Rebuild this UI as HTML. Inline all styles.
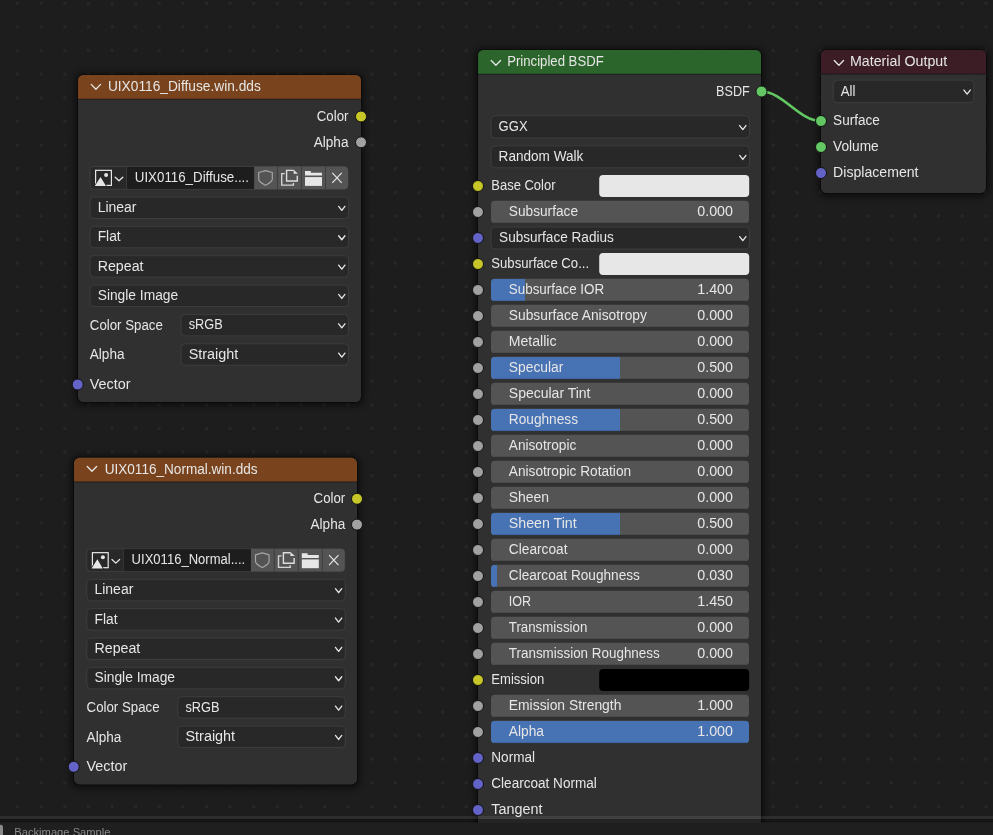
<!DOCTYPE html><html><head><meta charset="utf-8"><style>html,body{margin:0;padding:0;background:#1d1d1d;overflow:hidden;width:993px;height:835px}svg{display:block;will-change:transform}</style></head><body><svg width="993" height="835" viewBox="0 0 993 835" font-family="Liberation Sans, sans-serif">
<defs><filter id="blur" x="-10%" y="-10%" width="120%" height="120%"><feGaussianBlur stdDeviation="3.2"/></filter>
<pattern id="grid" x="16.5" y="2.4" width="23.62" height="23.62" patternUnits="userSpaceOnUse"><rect x="-0.2" y="-0.2" width="2.6" height="2.6" fill="#272727"/></pattern></defs>
<rect width="993" height="835" fill="#1d1d1d"/>
<path fill="#272727" d="M16.1 1.7h3v3.2h-3zM16.1 25.3h3v3.2h-3zM16.1 48.9h3v3.2h-3zM16.1 72.6h3v3.2h-3zM16.1 96.2h3v3.2h-3zM16.1 119.8h3v3.2h-3zM16.1 143.4h3v3.2h-3zM16.1 167.0h3v3.2h-3zM16.1 190.7h3v3.2h-3zM16.1 214.3h3v3.2h-3zM16.1 237.9h3v3.2h-3zM16.1 261.5h3v3.2h-3zM16.1 285.1h3v3.2h-3zM16.1 308.8h3v3.2h-3zM16.1 332.4h3v3.2h-3zM16.1 356.0h3v3.2h-3zM16.1 379.6h3v3.2h-3zM16.1 403.2h3v3.2h-3zM16.1 426.9h3v3.2h-3zM16.1 450.5h3v3.2h-3zM16.1 474.1h3v3.2h-3zM16.1 497.7h3v3.2h-3zM16.1 521.3h3v3.2h-3zM16.1 545.0h3v3.2h-3zM16.1 568.6h3v3.2h-3zM16.1 592.2h3v3.2h-3zM16.1 615.8h3v3.2h-3zM16.1 639.4h3v3.2h-3zM16.1 663.1h3v3.2h-3zM16.1 686.7h3v3.2h-3zM16.1 710.3h3v3.2h-3zM16.1 733.9h3v3.2h-3zM16.1 757.5h3v3.2h-3zM16.1 781.2h3v3.2h-3zM16.1 804.8h3v3.2h-3zM16.1 828.4h3v3.2h-3zM39.7 1.7h3v3.2h-3zM39.7 25.3h3v3.2h-3zM39.7 48.9h3v3.2h-3zM39.7 72.6h3v3.2h-3zM39.7 96.2h3v3.2h-3zM39.7 119.8h3v3.2h-3zM39.7 143.4h3v3.2h-3zM39.7 167.0h3v3.2h-3zM39.7 190.7h3v3.2h-3zM39.7 214.3h3v3.2h-3zM39.7 237.9h3v3.2h-3zM39.7 261.5h3v3.2h-3zM39.7 285.1h3v3.2h-3zM39.7 308.8h3v3.2h-3zM39.7 332.4h3v3.2h-3zM39.7 356.0h3v3.2h-3zM39.7 379.6h3v3.2h-3zM39.7 403.2h3v3.2h-3zM39.7 426.9h3v3.2h-3zM39.7 450.5h3v3.2h-3zM39.7 474.1h3v3.2h-3zM39.7 497.7h3v3.2h-3zM39.7 521.3h3v3.2h-3zM39.7 545.0h3v3.2h-3zM39.7 568.6h3v3.2h-3zM39.7 592.2h3v3.2h-3zM39.7 615.8h3v3.2h-3zM39.7 639.4h3v3.2h-3zM39.7 663.1h3v3.2h-3zM39.7 686.7h3v3.2h-3zM39.7 710.3h3v3.2h-3zM39.7 733.9h3v3.2h-3zM39.7 757.5h3v3.2h-3zM39.7 781.2h3v3.2h-3zM39.7 804.8h3v3.2h-3zM39.7 828.4h3v3.2h-3zM63.3 1.7h3v3.2h-3zM63.3 25.3h3v3.2h-3zM63.3 48.9h3v3.2h-3zM63.3 72.6h3v3.2h-3zM63.3 96.2h3v3.2h-3zM63.3 119.8h3v3.2h-3zM63.3 143.4h3v3.2h-3zM63.3 167.0h3v3.2h-3zM63.3 190.7h3v3.2h-3zM63.3 214.3h3v3.2h-3zM63.3 237.9h3v3.2h-3zM63.3 261.5h3v3.2h-3zM63.3 285.1h3v3.2h-3zM63.3 308.8h3v3.2h-3zM63.3 332.4h3v3.2h-3zM63.3 356.0h3v3.2h-3zM63.3 379.6h3v3.2h-3zM63.3 403.2h3v3.2h-3zM63.3 426.9h3v3.2h-3zM63.3 450.5h3v3.2h-3zM63.3 474.1h3v3.2h-3zM63.3 497.7h3v3.2h-3zM63.3 521.3h3v3.2h-3zM63.3 545.0h3v3.2h-3zM63.3 568.6h3v3.2h-3zM63.3 592.2h3v3.2h-3zM63.3 615.8h3v3.2h-3zM63.3 639.4h3v3.2h-3zM63.3 663.1h3v3.2h-3zM63.3 686.7h3v3.2h-3zM63.3 710.3h3v3.2h-3zM63.3 733.9h3v3.2h-3zM63.3 757.5h3v3.2h-3zM63.3 781.2h3v3.2h-3zM63.3 804.8h3v3.2h-3zM63.3 828.4h3v3.2h-3zM86.9 1.7h3v3.2h-3zM86.9 25.3h3v3.2h-3zM86.9 48.9h3v3.2h-3zM86.9 72.6h3v3.2h-3zM86.9 96.2h3v3.2h-3zM86.9 119.8h3v3.2h-3zM86.9 143.4h3v3.2h-3zM86.9 167.0h3v3.2h-3zM86.9 190.7h3v3.2h-3zM86.9 214.3h3v3.2h-3zM86.9 237.9h3v3.2h-3zM86.9 261.5h3v3.2h-3zM86.9 285.1h3v3.2h-3zM86.9 308.8h3v3.2h-3zM86.9 332.4h3v3.2h-3zM86.9 356.0h3v3.2h-3zM86.9 379.6h3v3.2h-3zM86.9 403.2h3v3.2h-3zM86.9 426.9h3v3.2h-3zM86.9 450.5h3v3.2h-3zM86.9 474.1h3v3.2h-3zM86.9 497.7h3v3.2h-3zM86.9 521.3h3v3.2h-3zM86.9 545.0h3v3.2h-3zM86.9 568.6h3v3.2h-3zM86.9 592.2h3v3.2h-3zM86.9 615.8h3v3.2h-3zM86.9 639.4h3v3.2h-3zM86.9 663.1h3v3.2h-3zM86.9 686.7h3v3.2h-3zM86.9 710.3h3v3.2h-3zM86.9 733.9h3v3.2h-3zM86.9 757.5h3v3.2h-3zM86.9 781.2h3v3.2h-3zM86.9 804.8h3v3.2h-3zM86.9 828.4h3v3.2h-3zM110.6 1.7h3v3.2h-3zM110.6 25.3h3v3.2h-3zM110.6 48.9h3v3.2h-3zM110.6 72.6h3v3.2h-3zM110.6 96.2h3v3.2h-3zM110.6 119.8h3v3.2h-3zM110.6 143.4h3v3.2h-3zM110.6 167.0h3v3.2h-3zM110.6 190.7h3v3.2h-3zM110.6 214.3h3v3.2h-3zM110.6 237.9h3v3.2h-3zM110.6 261.5h3v3.2h-3zM110.6 285.1h3v3.2h-3zM110.6 308.8h3v3.2h-3zM110.6 332.4h3v3.2h-3zM110.6 356.0h3v3.2h-3zM110.6 379.6h3v3.2h-3zM110.6 403.2h3v3.2h-3zM110.6 426.9h3v3.2h-3zM110.6 450.5h3v3.2h-3zM110.6 474.1h3v3.2h-3zM110.6 497.7h3v3.2h-3zM110.6 521.3h3v3.2h-3zM110.6 545.0h3v3.2h-3zM110.6 568.6h3v3.2h-3zM110.6 592.2h3v3.2h-3zM110.6 615.8h3v3.2h-3zM110.6 639.4h3v3.2h-3zM110.6 663.1h3v3.2h-3zM110.6 686.7h3v3.2h-3zM110.6 710.3h3v3.2h-3zM110.6 733.9h3v3.2h-3zM110.6 757.5h3v3.2h-3zM110.6 781.2h3v3.2h-3zM110.6 804.8h3v3.2h-3zM110.6 828.4h3v3.2h-3zM134.2 1.7h3v3.2h-3zM134.2 25.3h3v3.2h-3zM134.2 48.9h3v3.2h-3zM134.2 72.6h3v3.2h-3zM134.2 96.2h3v3.2h-3zM134.2 119.8h3v3.2h-3zM134.2 143.4h3v3.2h-3zM134.2 167.0h3v3.2h-3zM134.2 190.7h3v3.2h-3zM134.2 214.3h3v3.2h-3zM134.2 237.9h3v3.2h-3zM134.2 261.5h3v3.2h-3zM134.2 285.1h3v3.2h-3zM134.2 308.8h3v3.2h-3zM134.2 332.4h3v3.2h-3zM134.2 356.0h3v3.2h-3zM134.2 379.6h3v3.2h-3zM134.2 403.2h3v3.2h-3zM134.2 426.9h3v3.2h-3zM134.2 450.5h3v3.2h-3zM134.2 474.1h3v3.2h-3zM134.2 497.7h3v3.2h-3zM134.2 521.3h3v3.2h-3zM134.2 545.0h3v3.2h-3zM134.2 568.6h3v3.2h-3zM134.2 592.2h3v3.2h-3zM134.2 615.8h3v3.2h-3zM134.2 639.4h3v3.2h-3zM134.2 663.1h3v3.2h-3zM134.2 686.7h3v3.2h-3zM134.2 710.3h3v3.2h-3zM134.2 733.9h3v3.2h-3zM134.2 757.5h3v3.2h-3zM134.2 781.2h3v3.2h-3zM134.2 804.8h3v3.2h-3zM134.2 828.4h3v3.2h-3zM157.8 1.7h3v3.2h-3zM157.8 25.3h3v3.2h-3zM157.8 48.9h3v3.2h-3zM157.8 72.6h3v3.2h-3zM157.8 96.2h3v3.2h-3zM157.8 119.8h3v3.2h-3zM157.8 143.4h3v3.2h-3zM157.8 167.0h3v3.2h-3zM157.8 190.7h3v3.2h-3zM157.8 214.3h3v3.2h-3zM157.8 237.9h3v3.2h-3zM157.8 261.5h3v3.2h-3zM157.8 285.1h3v3.2h-3zM157.8 308.8h3v3.2h-3zM157.8 332.4h3v3.2h-3zM157.8 356.0h3v3.2h-3zM157.8 379.6h3v3.2h-3zM157.8 403.2h3v3.2h-3zM157.8 426.9h3v3.2h-3zM157.8 450.5h3v3.2h-3zM157.8 474.1h3v3.2h-3zM157.8 497.7h3v3.2h-3zM157.8 521.3h3v3.2h-3zM157.8 545.0h3v3.2h-3zM157.8 568.6h3v3.2h-3zM157.8 592.2h3v3.2h-3zM157.8 615.8h3v3.2h-3zM157.8 639.4h3v3.2h-3zM157.8 663.1h3v3.2h-3zM157.8 686.7h3v3.2h-3zM157.8 710.3h3v3.2h-3zM157.8 733.9h3v3.2h-3zM157.8 757.5h3v3.2h-3zM157.8 781.2h3v3.2h-3zM157.8 804.8h3v3.2h-3zM157.8 828.4h3v3.2h-3zM181.4 1.7h3v3.2h-3zM181.4 25.3h3v3.2h-3zM181.4 48.9h3v3.2h-3zM181.4 72.6h3v3.2h-3zM181.4 96.2h3v3.2h-3zM181.4 119.8h3v3.2h-3zM181.4 143.4h3v3.2h-3zM181.4 167.0h3v3.2h-3zM181.4 190.7h3v3.2h-3zM181.4 214.3h3v3.2h-3zM181.4 237.9h3v3.2h-3zM181.4 261.5h3v3.2h-3zM181.4 285.1h3v3.2h-3zM181.4 308.8h3v3.2h-3zM181.4 332.4h3v3.2h-3zM181.4 356.0h3v3.2h-3zM181.4 379.6h3v3.2h-3zM181.4 403.2h3v3.2h-3zM181.4 426.9h3v3.2h-3zM181.4 450.5h3v3.2h-3zM181.4 474.1h3v3.2h-3zM181.4 497.7h3v3.2h-3zM181.4 521.3h3v3.2h-3zM181.4 545.0h3v3.2h-3zM181.4 568.6h3v3.2h-3zM181.4 592.2h3v3.2h-3zM181.4 615.8h3v3.2h-3zM181.4 639.4h3v3.2h-3zM181.4 663.1h3v3.2h-3zM181.4 686.7h3v3.2h-3zM181.4 710.3h3v3.2h-3zM181.4 733.9h3v3.2h-3zM181.4 757.5h3v3.2h-3zM181.4 781.2h3v3.2h-3zM181.4 804.8h3v3.2h-3zM181.4 828.4h3v3.2h-3zM205.0 1.7h3v3.2h-3zM205.0 25.3h3v3.2h-3zM205.0 48.9h3v3.2h-3zM205.0 72.6h3v3.2h-3zM205.0 96.2h3v3.2h-3zM205.0 119.8h3v3.2h-3zM205.0 143.4h3v3.2h-3zM205.0 167.0h3v3.2h-3zM205.0 190.7h3v3.2h-3zM205.0 214.3h3v3.2h-3zM205.0 237.9h3v3.2h-3zM205.0 261.5h3v3.2h-3zM205.0 285.1h3v3.2h-3zM205.0 308.8h3v3.2h-3zM205.0 332.4h3v3.2h-3zM205.0 356.0h3v3.2h-3zM205.0 379.6h3v3.2h-3zM205.0 403.2h3v3.2h-3zM205.0 426.9h3v3.2h-3zM205.0 450.5h3v3.2h-3zM205.0 474.1h3v3.2h-3zM205.0 497.7h3v3.2h-3zM205.0 521.3h3v3.2h-3zM205.0 545.0h3v3.2h-3zM205.0 568.6h3v3.2h-3zM205.0 592.2h3v3.2h-3zM205.0 615.8h3v3.2h-3zM205.0 639.4h3v3.2h-3zM205.0 663.1h3v3.2h-3zM205.0 686.7h3v3.2h-3zM205.0 710.3h3v3.2h-3zM205.0 733.9h3v3.2h-3zM205.0 757.5h3v3.2h-3zM205.0 781.2h3v3.2h-3zM205.0 804.8h3v3.2h-3zM205.0 828.4h3v3.2h-3zM228.6 1.7h3v3.2h-3zM228.6 25.3h3v3.2h-3zM228.6 48.9h3v3.2h-3zM228.6 72.6h3v3.2h-3zM228.6 96.2h3v3.2h-3zM228.6 119.8h3v3.2h-3zM228.6 143.4h3v3.2h-3zM228.6 167.0h3v3.2h-3zM228.6 190.7h3v3.2h-3zM228.6 214.3h3v3.2h-3zM228.6 237.9h3v3.2h-3zM228.6 261.5h3v3.2h-3zM228.6 285.1h3v3.2h-3zM228.6 308.8h3v3.2h-3zM228.6 332.4h3v3.2h-3zM228.6 356.0h3v3.2h-3zM228.6 379.6h3v3.2h-3zM228.6 403.2h3v3.2h-3zM228.6 426.9h3v3.2h-3zM228.6 450.5h3v3.2h-3zM228.6 474.1h3v3.2h-3zM228.6 497.7h3v3.2h-3zM228.6 521.3h3v3.2h-3zM228.6 545.0h3v3.2h-3zM228.6 568.6h3v3.2h-3zM228.6 592.2h3v3.2h-3zM228.6 615.8h3v3.2h-3zM228.6 639.4h3v3.2h-3zM228.6 663.1h3v3.2h-3zM228.6 686.7h3v3.2h-3zM228.6 710.3h3v3.2h-3zM228.6 733.9h3v3.2h-3zM228.6 757.5h3v3.2h-3zM228.6 781.2h3v3.2h-3zM228.6 804.8h3v3.2h-3zM228.6 828.4h3v3.2h-3zM252.2 1.7h3v3.2h-3zM252.2 25.3h3v3.2h-3zM252.2 48.9h3v3.2h-3zM252.2 72.6h3v3.2h-3zM252.2 96.2h3v3.2h-3zM252.2 119.8h3v3.2h-3zM252.2 143.4h3v3.2h-3zM252.2 167.0h3v3.2h-3zM252.2 190.7h3v3.2h-3zM252.2 214.3h3v3.2h-3zM252.2 237.9h3v3.2h-3zM252.2 261.5h3v3.2h-3zM252.2 285.1h3v3.2h-3zM252.2 308.8h3v3.2h-3zM252.2 332.4h3v3.2h-3zM252.2 356.0h3v3.2h-3zM252.2 379.6h3v3.2h-3zM252.2 403.2h3v3.2h-3zM252.2 426.9h3v3.2h-3zM252.2 450.5h3v3.2h-3zM252.2 474.1h3v3.2h-3zM252.2 497.7h3v3.2h-3zM252.2 521.3h3v3.2h-3zM252.2 545.0h3v3.2h-3zM252.2 568.6h3v3.2h-3zM252.2 592.2h3v3.2h-3zM252.2 615.8h3v3.2h-3zM252.2 639.4h3v3.2h-3zM252.2 663.1h3v3.2h-3zM252.2 686.7h3v3.2h-3zM252.2 710.3h3v3.2h-3zM252.2 733.9h3v3.2h-3zM252.2 757.5h3v3.2h-3zM252.2 781.2h3v3.2h-3zM252.2 804.8h3v3.2h-3zM252.2 828.4h3v3.2h-3zM275.9 1.7h3v3.2h-3zM275.9 25.3h3v3.2h-3zM275.9 48.9h3v3.2h-3zM275.9 72.6h3v3.2h-3zM275.9 96.2h3v3.2h-3zM275.9 119.8h3v3.2h-3zM275.9 143.4h3v3.2h-3zM275.9 167.0h3v3.2h-3zM275.9 190.7h3v3.2h-3zM275.9 214.3h3v3.2h-3zM275.9 237.9h3v3.2h-3zM275.9 261.5h3v3.2h-3zM275.9 285.1h3v3.2h-3zM275.9 308.8h3v3.2h-3zM275.9 332.4h3v3.2h-3zM275.9 356.0h3v3.2h-3zM275.9 379.6h3v3.2h-3zM275.9 403.2h3v3.2h-3zM275.9 426.9h3v3.2h-3zM275.9 450.5h3v3.2h-3zM275.9 474.1h3v3.2h-3zM275.9 497.7h3v3.2h-3zM275.9 521.3h3v3.2h-3zM275.9 545.0h3v3.2h-3zM275.9 568.6h3v3.2h-3zM275.9 592.2h3v3.2h-3zM275.9 615.8h3v3.2h-3zM275.9 639.4h3v3.2h-3zM275.9 663.1h3v3.2h-3zM275.9 686.7h3v3.2h-3zM275.9 710.3h3v3.2h-3zM275.9 733.9h3v3.2h-3zM275.9 757.5h3v3.2h-3zM275.9 781.2h3v3.2h-3zM275.9 804.8h3v3.2h-3zM275.9 828.4h3v3.2h-3zM299.5 1.7h3v3.2h-3zM299.5 25.3h3v3.2h-3zM299.5 48.9h3v3.2h-3zM299.5 72.6h3v3.2h-3zM299.5 96.2h3v3.2h-3zM299.5 119.8h3v3.2h-3zM299.5 143.4h3v3.2h-3zM299.5 167.0h3v3.2h-3zM299.5 190.7h3v3.2h-3zM299.5 214.3h3v3.2h-3zM299.5 237.9h3v3.2h-3zM299.5 261.5h3v3.2h-3zM299.5 285.1h3v3.2h-3zM299.5 308.8h3v3.2h-3zM299.5 332.4h3v3.2h-3zM299.5 356.0h3v3.2h-3zM299.5 379.6h3v3.2h-3zM299.5 403.2h3v3.2h-3zM299.5 426.9h3v3.2h-3zM299.5 450.5h3v3.2h-3zM299.5 474.1h3v3.2h-3zM299.5 497.7h3v3.2h-3zM299.5 521.3h3v3.2h-3zM299.5 545.0h3v3.2h-3zM299.5 568.6h3v3.2h-3zM299.5 592.2h3v3.2h-3zM299.5 615.8h3v3.2h-3zM299.5 639.4h3v3.2h-3zM299.5 663.1h3v3.2h-3zM299.5 686.7h3v3.2h-3zM299.5 710.3h3v3.2h-3zM299.5 733.9h3v3.2h-3zM299.5 757.5h3v3.2h-3zM299.5 781.2h3v3.2h-3zM299.5 804.8h3v3.2h-3zM299.5 828.4h3v3.2h-3zM323.1 1.7h3v3.2h-3zM323.1 25.3h3v3.2h-3zM323.1 48.9h3v3.2h-3zM323.1 72.6h3v3.2h-3zM323.1 96.2h3v3.2h-3zM323.1 119.8h3v3.2h-3zM323.1 143.4h3v3.2h-3zM323.1 167.0h3v3.2h-3zM323.1 190.7h3v3.2h-3zM323.1 214.3h3v3.2h-3zM323.1 237.9h3v3.2h-3zM323.1 261.5h3v3.2h-3zM323.1 285.1h3v3.2h-3zM323.1 308.8h3v3.2h-3zM323.1 332.4h3v3.2h-3zM323.1 356.0h3v3.2h-3zM323.1 379.6h3v3.2h-3zM323.1 403.2h3v3.2h-3zM323.1 426.9h3v3.2h-3zM323.1 450.5h3v3.2h-3zM323.1 474.1h3v3.2h-3zM323.1 497.7h3v3.2h-3zM323.1 521.3h3v3.2h-3zM323.1 545.0h3v3.2h-3zM323.1 568.6h3v3.2h-3zM323.1 592.2h3v3.2h-3zM323.1 615.8h3v3.2h-3zM323.1 639.4h3v3.2h-3zM323.1 663.1h3v3.2h-3zM323.1 686.7h3v3.2h-3zM323.1 710.3h3v3.2h-3zM323.1 733.9h3v3.2h-3zM323.1 757.5h3v3.2h-3zM323.1 781.2h3v3.2h-3zM323.1 804.8h3v3.2h-3zM323.1 828.4h3v3.2h-3zM346.7 1.7h3v3.2h-3zM346.7 25.3h3v3.2h-3zM346.7 48.9h3v3.2h-3zM346.7 72.6h3v3.2h-3zM346.7 96.2h3v3.2h-3zM346.7 119.8h3v3.2h-3zM346.7 143.4h3v3.2h-3zM346.7 167.0h3v3.2h-3zM346.7 190.7h3v3.2h-3zM346.7 214.3h3v3.2h-3zM346.7 237.9h3v3.2h-3zM346.7 261.5h3v3.2h-3zM346.7 285.1h3v3.2h-3zM346.7 308.8h3v3.2h-3zM346.7 332.4h3v3.2h-3zM346.7 356.0h3v3.2h-3zM346.7 379.6h3v3.2h-3zM346.7 403.2h3v3.2h-3zM346.7 426.9h3v3.2h-3zM346.7 450.5h3v3.2h-3zM346.7 474.1h3v3.2h-3zM346.7 497.7h3v3.2h-3zM346.7 521.3h3v3.2h-3zM346.7 545.0h3v3.2h-3zM346.7 568.6h3v3.2h-3zM346.7 592.2h3v3.2h-3zM346.7 615.8h3v3.2h-3zM346.7 639.4h3v3.2h-3zM346.7 663.1h3v3.2h-3zM346.7 686.7h3v3.2h-3zM346.7 710.3h3v3.2h-3zM346.7 733.9h3v3.2h-3zM346.7 757.5h3v3.2h-3zM346.7 781.2h3v3.2h-3zM346.7 804.8h3v3.2h-3zM346.7 828.4h3v3.2h-3zM370.3 1.7h3v3.2h-3zM370.3 25.3h3v3.2h-3zM370.3 48.9h3v3.2h-3zM370.3 72.6h3v3.2h-3zM370.3 96.2h3v3.2h-3zM370.3 119.8h3v3.2h-3zM370.3 143.4h3v3.2h-3zM370.3 167.0h3v3.2h-3zM370.3 190.7h3v3.2h-3zM370.3 214.3h3v3.2h-3zM370.3 237.9h3v3.2h-3zM370.3 261.5h3v3.2h-3zM370.3 285.1h3v3.2h-3zM370.3 308.8h3v3.2h-3zM370.3 332.4h3v3.2h-3zM370.3 356.0h3v3.2h-3zM370.3 379.6h3v3.2h-3zM370.3 403.2h3v3.2h-3zM370.3 426.9h3v3.2h-3zM370.3 450.5h3v3.2h-3zM370.3 474.1h3v3.2h-3zM370.3 497.7h3v3.2h-3zM370.3 521.3h3v3.2h-3zM370.3 545.0h3v3.2h-3zM370.3 568.6h3v3.2h-3zM370.3 592.2h3v3.2h-3zM370.3 615.8h3v3.2h-3zM370.3 639.4h3v3.2h-3zM370.3 663.1h3v3.2h-3zM370.3 686.7h3v3.2h-3zM370.3 710.3h3v3.2h-3zM370.3 733.9h3v3.2h-3zM370.3 757.5h3v3.2h-3zM370.3 781.2h3v3.2h-3zM370.3 804.8h3v3.2h-3zM370.3 828.4h3v3.2h-3zM393.9 1.7h3v3.2h-3zM393.9 25.3h3v3.2h-3zM393.9 48.9h3v3.2h-3zM393.9 72.6h3v3.2h-3zM393.9 96.2h3v3.2h-3zM393.9 119.8h3v3.2h-3zM393.9 143.4h3v3.2h-3zM393.9 167.0h3v3.2h-3zM393.9 190.7h3v3.2h-3zM393.9 214.3h3v3.2h-3zM393.9 237.9h3v3.2h-3zM393.9 261.5h3v3.2h-3zM393.9 285.1h3v3.2h-3zM393.9 308.8h3v3.2h-3zM393.9 332.4h3v3.2h-3zM393.9 356.0h3v3.2h-3zM393.9 379.6h3v3.2h-3zM393.9 403.2h3v3.2h-3zM393.9 426.9h3v3.2h-3zM393.9 450.5h3v3.2h-3zM393.9 474.1h3v3.2h-3zM393.9 497.7h3v3.2h-3zM393.9 521.3h3v3.2h-3zM393.9 545.0h3v3.2h-3zM393.9 568.6h3v3.2h-3zM393.9 592.2h3v3.2h-3zM393.9 615.8h3v3.2h-3zM393.9 639.4h3v3.2h-3zM393.9 663.1h3v3.2h-3zM393.9 686.7h3v3.2h-3zM393.9 710.3h3v3.2h-3zM393.9 733.9h3v3.2h-3zM393.9 757.5h3v3.2h-3zM393.9 781.2h3v3.2h-3zM393.9 804.8h3v3.2h-3zM393.9 828.4h3v3.2h-3zM417.6 1.7h3v3.2h-3zM417.6 25.3h3v3.2h-3zM417.6 48.9h3v3.2h-3zM417.6 72.6h3v3.2h-3zM417.6 96.2h3v3.2h-3zM417.6 119.8h3v3.2h-3zM417.6 143.4h3v3.2h-3zM417.6 167.0h3v3.2h-3zM417.6 190.7h3v3.2h-3zM417.6 214.3h3v3.2h-3zM417.6 237.9h3v3.2h-3zM417.6 261.5h3v3.2h-3zM417.6 285.1h3v3.2h-3zM417.6 308.8h3v3.2h-3zM417.6 332.4h3v3.2h-3zM417.6 356.0h3v3.2h-3zM417.6 379.6h3v3.2h-3zM417.6 403.2h3v3.2h-3zM417.6 426.9h3v3.2h-3zM417.6 450.5h3v3.2h-3zM417.6 474.1h3v3.2h-3zM417.6 497.7h3v3.2h-3zM417.6 521.3h3v3.2h-3zM417.6 545.0h3v3.2h-3zM417.6 568.6h3v3.2h-3zM417.6 592.2h3v3.2h-3zM417.6 615.8h3v3.2h-3zM417.6 639.4h3v3.2h-3zM417.6 663.1h3v3.2h-3zM417.6 686.7h3v3.2h-3zM417.6 710.3h3v3.2h-3zM417.6 733.9h3v3.2h-3zM417.6 757.5h3v3.2h-3zM417.6 781.2h3v3.2h-3zM417.6 804.8h3v3.2h-3zM417.6 828.4h3v3.2h-3zM441.2 1.7h3v3.2h-3zM441.2 25.3h3v3.2h-3zM441.2 48.9h3v3.2h-3zM441.2 72.6h3v3.2h-3zM441.2 96.2h3v3.2h-3zM441.2 119.8h3v3.2h-3zM441.2 143.4h3v3.2h-3zM441.2 167.0h3v3.2h-3zM441.2 190.7h3v3.2h-3zM441.2 214.3h3v3.2h-3zM441.2 237.9h3v3.2h-3zM441.2 261.5h3v3.2h-3zM441.2 285.1h3v3.2h-3zM441.2 308.8h3v3.2h-3zM441.2 332.4h3v3.2h-3zM441.2 356.0h3v3.2h-3zM441.2 379.6h3v3.2h-3zM441.2 403.2h3v3.2h-3zM441.2 426.9h3v3.2h-3zM441.2 450.5h3v3.2h-3zM441.2 474.1h3v3.2h-3zM441.2 497.7h3v3.2h-3zM441.2 521.3h3v3.2h-3zM441.2 545.0h3v3.2h-3zM441.2 568.6h3v3.2h-3zM441.2 592.2h3v3.2h-3zM441.2 615.8h3v3.2h-3zM441.2 639.4h3v3.2h-3zM441.2 663.1h3v3.2h-3zM441.2 686.7h3v3.2h-3zM441.2 710.3h3v3.2h-3zM441.2 733.9h3v3.2h-3zM441.2 757.5h3v3.2h-3zM441.2 781.2h3v3.2h-3zM441.2 804.8h3v3.2h-3zM441.2 828.4h3v3.2h-3zM464.8 1.7h3v3.2h-3zM464.8 25.3h3v3.2h-3zM464.8 48.9h3v3.2h-3zM464.8 72.6h3v3.2h-3zM464.8 96.2h3v3.2h-3zM464.8 119.8h3v3.2h-3zM464.8 143.4h3v3.2h-3zM464.8 167.0h3v3.2h-3zM464.8 190.7h3v3.2h-3zM464.8 214.3h3v3.2h-3zM464.8 237.9h3v3.2h-3zM464.8 261.5h3v3.2h-3zM464.8 285.1h3v3.2h-3zM464.8 308.8h3v3.2h-3zM464.8 332.4h3v3.2h-3zM464.8 356.0h3v3.2h-3zM464.8 379.6h3v3.2h-3zM464.8 403.2h3v3.2h-3zM464.8 426.9h3v3.2h-3zM464.8 450.5h3v3.2h-3zM464.8 474.1h3v3.2h-3zM464.8 497.7h3v3.2h-3zM464.8 521.3h3v3.2h-3zM464.8 545.0h3v3.2h-3zM464.8 568.6h3v3.2h-3zM464.8 592.2h3v3.2h-3zM464.8 615.8h3v3.2h-3zM464.8 639.4h3v3.2h-3zM464.8 663.1h3v3.2h-3zM464.8 686.7h3v3.2h-3zM464.8 710.3h3v3.2h-3zM464.8 733.9h3v3.2h-3zM464.8 757.5h3v3.2h-3zM464.8 781.2h3v3.2h-3zM464.8 804.8h3v3.2h-3zM464.8 828.4h3v3.2h-3zM488.4 1.7h3v3.2h-3zM488.4 25.3h3v3.2h-3zM488.4 48.9h3v3.2h-3zM488.4 72.6h3v3.2h-3zM488.4 96.2h3v3.2h-3zM488.4 119.8h3v3.2h-3zM488.4 143.4h3v3.2h-3zM488.4 167.0h3v3.2h-3zM488.4 190.7h3v3.2h-3zM488.4 214.3h3v3.2h-3zM488.4 237.9h3v3.2h-3zM488.4 261.5h3v3.2h-3zM488.4 285.1h3v3.2h-3zM488.4 308.8h3v3.2h-3zM488.4 332.4h3v3.2h-3zM488.4 356.0h3v3.2h-3zM488.4 379.6h3v3.2h-3zM488.4 403.2h3v3.2h-3zM488.4 426.9h3v3.2h-3zM488.4 450.5h3v3.2h-3zM488.4 474.1h3v3.2h-3zM488.4 497.7h3v3.2h-3zM488.4 521.3h3v3.2h-3zM488.4 545.0h3v3.2h-3zM488.4 568.6h3v3.2h-3zM488.4 592.2h3v3.2h-3zM488.4 615.8h3v3.2h-3zM488.4 639.4h3v3.2h-3zM488.4 663.1h3v3.2h-3zM488.4 686.7h3v3.2h-3zM488.4 710.3h3v3.2h-3zM488.4 733.9h3v3.2h-3zM488.4 757.5h3v3.2h-3zM488.4 781.2h3v3.2h-3zM488.4 804.8h3v3.2h-3zM488.4 828.4h3v3.2h-3zM512.0 1.7h3v3.2h-3zM512.0 25.3h3v3.2h-3zM512.0 48.9h3v3.2h-3zM512.0 72.6h3v3.2h-3zM512.0 96.2h3v3.2h-3zM512.0 119.8h3v3.2h-3zM512.0 143.4h3v3.2h-3zM512.0 167.0h3v3.2h-3zM512.0 190.7h3v3.2h-3zM512.0 214.3h3v3.2h-3zM512.0 237.9h3v3.2h-3zM512.0 261.5h3v3.2h-3zM512.0 285.1h3v3.2h-3zM512.0 308.8h3v3.2h-3zM512.0 332.4h3v3.2h-3zM512.0 356.0h3v3.2h-3zM512.0 379.6h3v3.2h-3zM512.0 403.2h3v3.2h-3zM512.0 426.9h3v3.2h-3zM512.0 450.5h3v3.2h-3zM512.0 474.1h3v3.2h-3zM512.0 497.7h3v3.2h-3zM512.0 521.3h3v3.2h-3zM512.0 545.0h3v3.2h-3zM512.0 568.6h3v3.2h-3zM512.0 592.2h3v3.2h-3zM512.0 615.8h3v3.2h-3zM512.0 639.4h3v3.2h-3zM512.0 663.1h3v3.2h-3zM512.0 686.7h3v3.2h-3zM512.0 710.3h3v3.2h-3zM512.0 733.9h3v3.2h-3zM512.0 757.5h3v3.2h-3zM512.0 781.2h3v3.2h-3zM512.0 804.8h3v3.2h-3zM512.0 828.4h3v3.2h-3zM535.6 1.7h3v3.2h-3zM535.6 25.3h3v3.2h-3zM535.6 48.9h3v3.2h-3zM535.6 72.6h3v3.2h-3zM535.6 96.2h3v3.2h-3zM535.6 119.8h3v3.2h-3zM535.6 143.4h3v3.2h-3zM535.6 167.0h3v3.2h-3zM535.6 190.7h3v3.2h-3zM535.6 214.3h3v3.2h-3zM535.6 237.9h3v3.2h-3zM535.6 261.5h3v3.2h-3zM535.6 285.1h3v3.2h-3zM535.6 308.8h3v3.2h-3zM535.6 332.4h3v3.2h-3zM535.6 356.0h3v3.2h-3zM535.6 379.6h3v3.2h-3zM535.6 403.2h3v3.2h-3zM535.6 426.9h3v3.2h-3zM535.6 450.5h3v3.2h-3zM535.6 474.1h3v3.2h-3zM535.6 497.7h3v3.2h-3zM535.6 521.3h3v3.2h-3zM535.6 545.0h3v3.2h-3zM535.6 568.6h3v3.2h-3zM535.6 592.2h3v3.2h-3zM535.6 615.8h3v3.2h-3zM535.6 639.4h3v3.2h-3zM535.6 663.1h3v3.2h-3zM535.6 686.7h3v3.2h-3zM535.6 710.3h3v3.2h-3zM535.6 733.9h3v3.2h-3zM535.6 757.5h3v3.2h-3zM535.6 781.2h3v3.2h-3zM535.6 804.8h3v3.2h-3zM535.6 828.4h3v3.2h-3zM559.2 1.7h3v3.2h-3zM559.2 25.3h3v3.2h-3zM559.2 48.9h3v3.2h-3zM559.2 72.6h3v3.2h-3zM559.2 96.2h3v3.2h-3zM559.2 119.8h3v3.2h-3zM559.2 143.4h3v3.2h-3zM559.2 167.0h3v3.2h-3zM559.2 190.7h3v3.2h-3zM559.2 214.3h3v3.2h-3zM559.2 237.9h3v3.2h-3zM559.2 261.5h3v3.2h-3zM559.2 285.1h3v3.2h-3zM559.2 308.8h3v3.2h-3zM559.2 332.4h3v3.2h-3zM559.2 356.0h3v3.2h-3zM559.2 379.6h3v3.2h-3zM559.2 403.2h3v3.2h-3zM559.2 426.9h3v3.2h-3zM559.2 450.5h3v3.2h-3zM559.2 474.1h3v3.2h-3zM559.2 497.7h3v3.2h-3zM559.2 521.3h3v3.2h-3zM559.2 545.0h3v3.2h-3zM559.2 568.6h3v3.2h-3zM559.2 592.2h3v3.2h-3zM559.2 615.8h3v3.2h-3zM559.2 639.4h3v3.2h-3zM559.2 663.1h3v3.2h-3zM559.2 686.7h3v3.2h-3zM559.2 710.3h3v3.2h-3zM559.2 733.9h3v3.2h-3zM559.2 757.5h3v3.2h-3zM559.2 781.2h3v3.2h-3zM559.2 804.8h3v3.2h-3zM559.2 828.4h3v3.2h-3zM582.9 1.7h3v3.2h-3zM582.9 25.3h3v3.2h-3zM582.9 48.9h3v3.2h-3zM582.9 72.6h3v3.2h-3zM582.9 96.2h3v3.2h-3zM582.9 119.8h3v3.2h-3zM582.9 143.4h3v3.2h-3zM582.9 167.0h3v3.2h-3zM582.9 190.7h3v3.2h-3zM582.9 214.3h3v3.2h-3zM582.9 237.9h3v3.2h-3zM582.9 261.5h3v3.2h-3zM582.9 285.1h3v3.2h-3zM582.9 308.8h3v3.2h-3zM582.9 332.4h3v3.2h-3zM582.9 356.0h3v3.2h-3zM582.9 379.6h3v3.2h-3zM582.9 403.2h3v3.2h-3zM582.9 426.9h3v3.2h-3zM582.9 450.5h3v3.2h-3zM582.9 474.1h3v3.2h-3zM582.9 497.7h3v3.2h-3zM582.9 521.3h3v3.2h-3zM582.9 545.0h3v3.2h-3zM582.9 568.6h3v3.2h-3zM582.9 592.2h3v3.2h-3zM582.9 615.8h3v3.2h-3zM582.9 639.4h3v3.2h-3zM582.9 663.1h3v3.2h-3zM582.9 686.7h3v3.2h-3zM582.9 710.3h3v3.2h-3zM582.9 733.9h3v3.2h-3zM582.9 757.5h3v3.2h-3zM582.9 781.2h3v3.2h-3zM582.9 804.8h3v3.2h-3zM582.9 828.4h3v3.2h-3zM606.5 1.7h3v3.2h-3zM606.5 25.3h3v3.2h-3zM606.5 48.9h3v3.2h-3zM606.5 72.6h3v3.2h-3zM606.5 96.2h3v3.2h-3zM606.5 119.8h3v3.2h-3zM606.5 143.4h3v3.2h-3zM606.5 167.0h3v3.2h-3zM606.5 190.7h3v3.2h-3zM606.5 214.3h3v3.2h-3zM606.5 237.9h3v3.2h-3zM606.5 261.5h3v3.2h-3zM606.5 285.1h3v3.2h-3zM606.5 308.8h3v3.2h-3zM606.5 332.4h3v3.2h-3zM606.5 356.0h3v3.2h-3zM606.5 379.6h3v3.2h-3zM606.5 403.2h3v3.2h-3zM606.5 426.9h3v3.2h-3zM606.5 450.5h3v3.2h-3zM606.5 474.1h3v3.2h-3zM606.5 497.7h3v3.2h-3zM606.5 521.3h3v3.2h-3zM606.5 545.0h3v3.2h-3zM606.5 568.6h3v3.2h-3zM606.5 592.2h3v3.2h-3zM606.5 615.8h3v3.2h-3zM606.5 639.4h3v3.2h-3zM606.5 663.1h3v3.2h-3zM606.5 686.7h3v3.2h-3zM606.5 710.3h3v3.2h-3zM606.5 733.9h3v3.2h-3zM606.5 757.5h3v3.2h-3zM606.5 781.2h3v3.2h-3zM606.5 804.8h3v3.2h-3zM606.5 828.4h3v3.2h-3zM630.1 1.7h3v3.2h-3zM630.1 25.3h3v3.2h-3zM630.1 48.9h3v3.2h-3zM630.1 72.6h3v3.2h-3zM630.1 96.2h3v3.2h-3zM630.1 119.8h3v3.2h-3zM630.1 143.4h3v3.2h-3zM630.1 167.0h3v3.2h-3zM630.1 190.7h3v3.2h-3zM630.1 214.3h3v3.2h-3zM630.1 237.9h3v3.2h-3zM630.1 261.5h3v3.2h-3zM630.1 285.1h3v3.2h-3zM630.1 308.8h3v3.2h-3zM630.1 332.4h3v3.2h-3zM630.1 356.0h3v3.2h-3zM630.1 379.6h3v3.2h-3zM630.1 403.2h3v3.2h-3zM630.1 426.9h3v3.2h-3zM630.1 450.5h3v3.2h-3zM630.1 474.1h3v3.2h-3zM630.1 497.7h3v3.2h-3zM630.1 521.3h3v3.2h-3zM630.1 545.0h3v3.2h-3zM630.1 568.6h3v3.2h-3zM630.1 592.2h3v3.2h-3zM630.1 615.8h3v3.2h-3zM630.1 639.4h3v3.2h-3zM630.1 663.1h3v3.2h-3zM630.1 686.7h3v3.2h-3zM630.1 710.3h3v3.2h-3zM630.1 733.9h3v3.2h-3zM630.1 757.5h3v3.2h-3zM630.1 781.2h3v3.2h-3zM630.1 804.8h3v3.2h-3zM630.1 828.4h3v3.2h-3zM653.7 1.7h3v3.2h-3zM653.7 25.3h3v3.2h-3zM653.7 48.9h3v3.2h-3zM653.7 72.6h3v3.2h-3zM653.7 96.2h3v3.2h-3zM653.7 119.8h3v3.2h-3zM653.7 143.4h3v3.2h-3zM653.7 167.0h3v3.2h-3zM653.7 190.7h3v3.2h-3zM653.7 214.3h3v3.2h-3zM653.7 237.9h3v3.2h-3zM653.7 261.5h3v3.2h-3zM653.7 285.1h3v3.2h-3zM653.7 308.8h3v3.2h-3zM653.7 332.4h3v3.2h-3zM653.7 356.0h3v3.2h-3zM653.7 379.6h3v3.2h-3zM653.7 403.2h3v3.2h-3zM653.7 426.9h3v3.2h-3zM653.7 450.5h3v3.2h-3zM653.7 474.1h3v3.2h-3zM653.7 497.7h3v3.2h-3zM653.7 521.3h3v3.2h-3zM653.7 545.0h3v3.2h-3zM653.7 568.6h3v3.2h-3zM653.7 592.2h3v3.2h-3zM653.7 615.8h3v3.2h-3zM653.7 639.4h3v3.2h-3zM653.7 663.1h3v3.2h-3zM653.7 686.7h3v3.2h-3zM653.7 710.3h3v3.2h-3zM653.7 733.9h3v3.2h-3zM653.7 757.5h3v3.2h-3zM653.7 781.2h3v3.2h-3zM653.7 804.8h3v3.2h-3zM653.7 828.4h3v3.2h-3zM677.3 1.7h3v3.2h-3zM677.3 25.3h3v3.2h-3zM677.3 48.9h3v3.2h-3zM677.3 72.6h3v3.2h-3zM677.3 96.2h3v3.2h-3zM677.3 119.8h3v3.2h-3zM677.3 143.4h3v3.2h-3zM677.3 167.0h3v3.2h-3zM677.3 190.7h3v3.2h-3zM677.3 214.3h3v3.2h-3zM677.3 237.9h3v3.2h-3zM677.3 261.5h3v3.2h-3zM677.3 285.1h3v3.2h-3zM677.3 308.8h3v3.2h-3zM677.3 332.4h3v3.2h-3zM677.3 356.0h3v3.2h-3zM677.3 379.6h3v3.2h-3zM677.3 403.2h3v3.2h-3zM677.3 426.9h3v3.2h-3zM677.3 450.5h3v3.2h-3zM677.3 474.1h3v3.2h-3zM677.3 497.7h3v3.2h-3zM677.3 521.3h3v3.2h-3zM677.3 545.0h3v3.2h-3zM677.3 568.6h3v3.2h-3zM677.3 592.2h3v3.2h-3zM677.3 615.8h3v3.2h-3zM677.3 639.4h3v3.2h-3zM677.3 663.1h3v3.2h-3zM677.3 686.7h3v3.2h-3zM677.3 710.3h3v3.2h-3zM677.3 733.9h3v3.2h-3zM677.3 757.5h3v3.2h-3zM677.3 781.2h3v3.2h-3zM677.3 804.8h3v3.2h-3zM677.3 828.4h3v3.2h-3zM700.9 1.7h3v3.2h-3zM700.9 25.3h3v3.2h-3zM700.9 48.9h3v3.2h-3zM700.9 72.6h3v3.2h-3zM700.9 96.2h3v3.2h-3zM700.9 119.8h3v3.2h-3zM700.9 143.4h3v3.2h-3zM700.9 167.0h3v3.2h-3zM700.9 190.7h3v3.2h-3zM700.9 214.3h3v3.2h-3zM700.9 237.9h3v3.2h-3zM700.9 261.5h3v3.2h-3zM700.9 285.1h3v3.2h-3zM700.9 308.8h3v3.2h-3zM700.9 332.4h3v3.2h-3zM700.9 356.0h3v3.2h-3zM700.9 379.6h3v3.2h-3zM700.9 403.2h3v3.2h-3zM700.9 426.9h3v3.2h-3zM700.9 450.5h3v3.2h-3zM700.9 474.1h3v3.2h-3zM700.9 497.7h3v3.2h-3zM700.9 521.3h3v3.2h-3zM700.9 545.0h3v3.2h-3zM700.9 568.6h3v3.2h-3zM700.9 592.2h3v3.2h-3zM700.9 615.8h3v3.2h-3zM700.9 639.4h3v3.2h-3zM700.9 663.1h3v3.2h-3zM700.9 686.7h3v3.2h-3zM700.9 710.3h3v3.2h-3zM700.9 733.9h3v3.2h-3zM700.9 757.5h3v3.2h-3zM700.9 781.2h3v3.2h-3zM700.9 804.8h3v3.2h-3zM700.9 828.4h3v3.2h-3zM724.5 1.7h3v3.2h-3zM724.5 25.3h3v3.2h-3zM724.5 48.9h3v3.2h-3zM724.5 72.6h3v3.2h-3zM724.5 96.2h3v3.2h-3zM724.5 119.8h3v3.2h-3zM724.5 143.4h3v3.2h-3zM724.5 167.0h3v3.2h-3zM724.5 190.7h3v3.2h-3zM724.5 214.3h3v3.2h-3zM724.5 237.9h3v3.2h-3zM724.5 261.5h3v3.2h-3zM724.5 285.1h3v3.2h-3zM724.5 308.8h3v3.2h-3zM724.5 332.4h3v3.2h-3zM724.5 356.0h3v3.2h-3zM724.5 379.6h3v3.2h-3zM724.5 403.2h3v3.2h-3zM724.5 426.9h3v3.2h-3zM724.5 450.5h3v3.2h-3zM724.5 474.1h3v3.2h-3zM724.5 497.7h3v3.2h-3zM724.5 521.3h3v3.2h-3zM724.5 545.0h3v3.2h-3zM724.5 568.6h3v3.2h-3zM724.5 592.2h3v3.2h-3zM724.5 615.8h3v3.2h-3zM724.5 639.4h3v3.2h-3zM724.5 663.1h3v3.2h-3zM724.5 686.7h3v3.2h-3zM724.5 710.3h3v3.2h-3zM724.5 733.9h3v3.2h-3zM724.5 757.5h3v3.2h-3zM724.5 781.2h3v3.2h-3zM724.5 804.8h3v3.2h-3zM724.5 828.4h3v3.2h-3zM748.2 1.7h3v3.2h-3zM748.2 25.3h3v3.2h-3zM748.2 48.9h3v3.2h-3zM748.2 72.6h3v3.2h-3zM748.2 96.2h3v3.2h-3zM748.2 119.8h3v3.2h-3zM748.2 143.4h3v3.2h-3zM748.2 167.0h3v3.2h-3zM748.2 190.7h3v3.2h-3zM748.2 214.3h3v3.2h-3zM748.2 237.9h3v3.2h-3zM748.2 261.5h3v3.2h-3zM748.2 285.1h3v3.2h-3zM748.2 308.8h3v3.2h-3zM748.2 332.4h3v3.2h-3zM748.2 356.0h3v3.2h-3zM748.2 379.6h3v3.2h-3zM748.2 403.2h3v3.2h-3zM748.2 426.9h3v3.2h-3zM748.2 450.5h3v3.2h-3zM748.2 474.1h3v3.2h-3zM748.2 497.7h3v3.2h-3zM748.2 521.3h3v3.2h-3zM748.2 545.0h3v3.2h-3zM748.2 568.6h3v3.2h-3zM748.2 592.2h3v3.2h-3zM748.2 615.8h3v3.2h-3zM748.2 639.4h3v3.2h-3zM748.2 663.1h3v3.2h-3zM748.2 686.7h3v3.2h-3zM748.2 710.3h3v3.2h-3zM748.2 733.9h3v3.2h-3zM748.2 757.5h3v3.2h-3zM748.2 781.2h3v3.2h-3zM748.2 804.8h3v3.2h-3zM748.2 828.4h3v3.2h-3zM771.8 1.7h3v3.2h-3zM771.8 25.3h3v3.2h-3zM771.8 48.9h3v3.2h-3zM771.8 72.6h3v3.2h-3zM771.8 96.2h3v3.2h-3zM771.8 119.8h3v3.2h-3zM771.8 143.4h3v3.2h-3zM771.8 167.0h3v3.2h-3zM771.8 190.7h3v3.2h-3zM771.8 214.3h3v3.2h-3zM771.8 237.9h3v3.2h-3zM771.8 261.5h3v3.2h-3zM771.8 285.1h3v3.2h-3zM771.8 308.8h3v3.2h-3zM771.8 332.4h3v3.2h-3zM771.8 356.0h3v3.2h-3zM771.8 379.6h3v3.2h-3zM771.8 403.2h3v3.2h-3zM771.8 426.9h3v3.2h-3zM771.8 450.5h3v3.2h-3zM771.8 474.1h3v3.2h-3zM771.8 497.7h3v3.2h-3zM771.8 521.3h3v3.2h-3zM771.8 545.0h3v3.2h-3zM771.8 568.6h3v3.2h-3zM771.8 592.2h3v3.2h-3zM771.8 615.8h3v3.2h-3zM771.8 639.4h3v3.2h-3zM771.8 663.1h3v3.2h-3zM771.8 686.7h3v3.2h-3zM771.8 710.3h3v3.2h-3zM771.8 733.9h3v3.2h-3zM771.8 757.5h3v3.2h-3zM771.8 781.2h3v3.2h-3zM771.8 804.8h3v3.2h-3zM771.8 828.4h3v3.2h-3zM795.4 1.7h3v3.2h-3zM795.4 25.3h3v3.2h-3zM795.4 48.9h3v3.2h-3zM795.4 72.6h3v3.2h-3zM795.4 96.2h3v3.2h-3zM795.4 119.8h3v3.2h-3zM795.4 143.4h3v3.2h-3zM795.4 167.0h3v3.2h-3zM795.4 190.7h3v3.2h-3zM795.4 214.3h3v3.2h-3zM795.4 237.9h3v3.2h-3zM795.4 261.5h3v3.2h-3zM795.4 285.1h3v3.2h-3zM795.4 308.8h3v3.2h-3zM795.4 332.4h3v3.2h-3zM795.4 356.0h3v3.2h-3zM795.4 379.6h3v3.2h-3zM795.4 403.2h3v3.2h-3zM795.4 426.9h3v3.2h-3zM795.4 450.5h3v3.2h-3zM795.4 474.1h3v3.2h-3zM795.4 497.7h3v3.2h-3zM795.4 521.3h3v3.2h-3zM795.4 545.0h3v3.2h-3zM795.4 568.6h3v3.2h-3zM795.4 592.2h3v3.2h-3zM795.4 615.8h3v3.2h-3zM795.4 639.4h3v3.2h-3zM795.4 663.1h3v3.2h-3zM795.4 686.7h3v3.2h-3zM795.4 710.3h3v3.2h-3zM795.4 733.9h3v3.2h-3zM795.4 757.5h3v3.2h-3zM795.4 781.2h3v3.2h-3zM795.4 804.8h3v3.2h-3zM795.4 828.4h3v3.2h-3zM819.0 1.7h3v3.2h-3zM819.0 25.3h3v3.2h-3zM819.0 48.9h3v3.2h-3zM819.0 72.6h3v3.2h-3zM819.0 96.2h3v3.2h-3zM819.0 119.8h3v3.2h-3zM819.0 143.4h3v3.2h-3zM819.0 167.0h3v3.2h-3zM819.0 190.7h3v3.2h-3zM819.0 214.3h3v3.2h-3zM819.0 237.9h3v3.2h-3zM819.0 261.5h3v3.2h-3zM819.0 285.1h3v3.2h-3zM819.0 308.8h3v3.2h-3zM819.0 332.4h3v3.2h-3zM819.0 356.0h3v3.2h-3zM819.0 379.6h3v3.2h-3zM819.0 403.2h3v3.2h-3zM819.0 426.9h3v3.2h-3zM819.0 450.5h3v3.2h-3zM819.0 474.1h3v3.2h-3zM819.0 497.7h3v3.2h-3zM819.0 521.3h3v3.2h-3zM819.0 545.0h3v3.2h-3zM819.0 568.6h3v3.2h-3zM819.0 592.2h3v3.2h-3zM819.0 615.8h3v3.2h-3zM819.0 639.4h3v3.2h-3zM819.0 663.1h3v3.2h-3zM819.0 686.7h3v3.2h-3zM819.0 710.3h3v3.2h-3zM819.0 733.9h3v3.2h-3zM819.0 757.5h3v3.2h-3zM819.0 781.2h3v3.2h-3zM819.0 804.8h3v3.2h-3zM819.0 828.4h3v3.2h-3zM842.6 1.7h3v3.2h-3zM842.6 25.3h3v3.2h-3zM842.6 48.9h3v3.2h-3zM842.6 72.6h3v3.2h-3zM842.6 96.2h3v3.2h-3zM842.6 119.8h3v3.2h-3zM842.6 143.4h3v3.2h-3zM842.6 167.0h3v3.2h-3zM842.6 190.7h3v3.2h-3zM842.6 214.3h3v3.2h-3zM842.6 237.9h3v3.2h-3zM842.6 261.5h3v3.2h-3zM842.6 285.1h3v3.2h-3zM842.6 308.8h3v3.2h-3zM842.6 332.4h3v3.2h-3zM842.6 356.0h3v3.2h-3zM842.6 379.6h3v3.2h-3zM842.6 403.2h3v3.2h-3zM842.6 426.9h3v3.2h-3zM842.6 450.5h3v3.2h-3zM842.6 474.1h3v3.2h-3zM842.6 497.7h3v3.2h-3zM842.6 521.3h3v3.2h-3zM842.6 545.0h3v3.2h-3zM842.6 568.6h3v3.2h-3zM842.6 592.2h3v3.2h-3zM842.6 615.8h3v3.2h-3zM842.6 639.4h3v3.2h-3zM842.6 663.1h3v3.2h-3zM842.6 686.7h3v3.2h-3zM842.6 710.3h3v3.2h-3zM842.6 733.9h3v3.2h-3zM842.6 757.5h3v3.2h-3zM842.6 781.2h3v3.2h-3zM842.6 804.8h3v3.2h-3zM842.6 828.4h3v3.2h-3zM866.2 1.7h3v3.2h-3zM866.2 25.3h3v3.2h-3zM866.2 48.9h3v3.2h-3zM866.2 72.6h3v3.2h-3zM866.2 96.2h3v3.2h-3zM866.2 119.8h3v3.2h-3zM866.2 143.4h3v3.2h-3zM866.2 167.0h3v3.2h-3zM866.2 190.7h3v3.2h-3zM866.2 214.3h3v3.2h-3zM866.2 237.9h3v3.2h-3zM866.2 261.5h3v3.2h-3zM866.2 285.1h3v3.2h-3zM866.2 308.8h3v3.2h-3zM866.2 332.4h3v3.2h-3zM866.2 356.0h3v3.2h-3zM866.2 379.6h3v3.2h-3zM866.2 403.2h3v3.2h-3zM866.2 426.9h3v3.2h-3zM866.2 450.5h3v3.2h-3zM866.2 474.1h3v3.2h-3zM866.2 497.7h3v3.2h-3zM866.2 521.3h3v3.2h-3zM866.2 545.0h3v3.2h-3zM866.2 568.6h3v3.2h-3zM866.2 592.2h3v3.2h-3zM866.2 615.8h3v3.2h-3zM866.2 639.4h3v3.2h-3zM866.2 663.1h3v3.2h-3zM866.2 686.7h3v3.2h-3zM866.2 710.3h3v3.2h-3zM866.2 733.9h3v3.2h-3zM866.2 757.5h3v3.2h-3zM866.2 781.2h3v3.2h-3zM866.2 804.8h3v3.2h-3zM866.2 828.4h3v3.2h-3zM889.9 1.7h3v3.2h-3zM889.9 25.3h3v3.2h-3zM889.9 48.9h3v3.2h-3zM889.9 72.6h3v3.2h-3zM889.9 96.2h3v3.2h-3zM889.9 119.8h3v3.2h-3zM889.9 143.4h3v3.2h-3zM889.9 167.0h3v3.2h-3zM889.9 190.7h3v3.2h-3zM889.9 214.3h3v3.2h-3zM889.9 237.9h3v3.2h-3zM889.9 261.5h3v3.2h-3zM889.9 285.1h3v3.2h-3zM889.9 308.8h3v3.2h-3zM889.9 332.4h3v3.2h-3zM889.9 356.0h3v3.2h-3zM889.9 379.6h3v3.2h-3zM889.9 403.2h3v3.2h-3zM889.9 426.9h3v3.2h-3zM889.9 450.5h3v3.2h-3zM889.9 474.1h3v3.2h-3zM889.9 497.7h3v3.2h-3zM889.9 521.3h3v3.2h-3zM889.9 545.0h3v3.2h-3zM889.9 568.6h3v3.2h-3zM889.9 592.2h3v3.2h-3zM889.9 615.8h3v3.2h-3zM889.9 639.4h3v3.2h-3zM889.9 663.1h3v3.2h-3zM889.9 686.7h3v3.2h-3zM889.9 710.3h3v3.2h-3zM889.9 733.9h3v3.2h-3zM889.9 757.5h3v3.2h-3zM889.9 781.2h3v3.2h-3zM889.9 804.8h3v3.2h-3zM889.9 828.4h3v3.2h-3zM913.5 1.7h3v3.2h-3zM913.5 25.3h3v3.2h-3zM913.5 48.9h3v3.2h-3zM913.5 72.6h3v3.2h-3zM913.5 96.2h3v3.2h-3zM913.5 119.8h3v3.2h-3zM913.5 143.4h3v3.2h-3zM913.5 167.0h3v3.2h-3zM913.5 190.7h3v3.2h-3zM913.5 214.3h3v3.2h-3zM913.5 237.9h3v3.2h-3zM913.5 261.5h3v3.2h-3zM913.5 285.1h3v3.2h-3zM913.5 308.8h3v3.2h-3zM913.5 332.4h3v3.2h-3zM913.5 356.0h3v3.2h-3zM913.5 379.6h3v3.2h-3zM913.5 403.2h3v3.2h-3zM913.5 426.9h3v3.2h-3zM913.5 450.5h3v3.2h-3zM913.5 474.1h3v3.2h-3zM913.5 497.7h3v3.2h-3zM913.5 521.3h3v3.2h-3zM913.5 545.0h3v3.2h-3zM913.5 568.6h3v3.2h-3zM913.5 592.2h3v3.2h-3zM913.5 615.8h3v3.2h-3zM913.5 639.4h3v3.2h-3zM913.5 663.1h3v3.2h-3zM913.5 686.7h3v3.2h-3zM913.5 710.3h3v3.2h-3zM913.5 733.9h3v3.2h-3zM913.5 757.5h3v3.2h-3zM913.5 781.2h3v3.2h-3zM913.5 804.8h3v3.2h-3zM913.5 828.4h3v3.2h-3zM937.1 1.7h3v3.2h-3zM937.1 25.3h3v3.2h-3zM937.1 48.9h3v3.2h-3zM937.1 72.6h3v3.2h-3zM937.1 96.2h3v3.2h-3zM937.1 119.8h3v3.2h-3zM937.1 143.4h3v3.2h-3zM937.1 167.0h3v3.2h-3zM937.1 190.7h3v3.2h-3zM937.1 214.3h3v3.2h-3zM937.1 237.9h3v3.2h-3zM937.1 261.5h3v3.2h-3zM937.1 285.1h3v3.2h-3zM937.1 308.8h3v3.2h-3zM937.1 332.4h3v3.2h-3zM937.1 356.0h3v3.2h-3zM937.1 379.6h3v3.2h-3zM937.1 403.2h3v3.2h-3zM937.1 426.9h3v3.2h-3zM937.1 450.5h3v3.2h-3zM937.1 474.1h3v3.2h-3zM937.1 497.7h3v3.2h-3zM937.1 521.3h3v3.2h-3zM937.1 545.0h3v3.2h-3zM937.1 568.6h3v3.2h-3zM937.1 592.2h3v3.2h-3zM937.1 615.8h3v3.2h-3zM937.1 639.4h3v3.2h-3zM937.1 663.1h3v3.2h-3zM937.1 686.7h3v3.2h-3zM937.1 710.3h3v3.2h-3zM937.1 733.9h3v3.2h-3zM937.1 757.5h3v3.2h-3zM937.1 781.2h3v3.2h-3zM937.1 804.8h3v3.2h-3zM937.1 828.4h3v3.2h-3zM960.7 1.7h3v3.2h-3zM960.7 25.3h3v3.2h-3zM960.7 48.9h3v3.2h-3zM960.7 72.6h3v3.2h-3zM960.7 96.2h3v3.2h-3zM960.7 119.8h3v3.2h-3zM960.7 143.4h3v3.2h-3zM960.7 167.0h3v3.2h-3zM960.7 190.7h3v3.2h-3zM960.7 214.3h3v3.2h-3zM960.7 237.9h3v3.2h-3zM960.7 261.5h3v3.2h-3zM960.7 285.1h3v3.2h-3zM960.7 308.8h3v3.2h-3zM960.7 332.4h3v3.2h-3zM960.7 356.0h3v3.2h-3zM960.7 379.6h3v3.2h-3zM960.7 403.2h3v3.2h-3zM960.7 426.9h3v3.2h-3zM960.7 450.5h3v3.2h-3zM960.7 474.1h3v3.2h-3zM960.7 497.7h3v3.2h-3zM960.7 521.3h3v3.2h-3zM960.7 545.0h3v3.2h-3zM960.7 568.6h3v3.2h-3zM960.7 592.2h3v3.2h-3zM960.7 615.8h3v3.2h-3zM960.7 639.4h3v3.2h-3zM960.7 663.1h3v3.2h-3zM960.7 686.7h3v3.2h-3zM960.7 710.3h3v3.2h-3zM960.7 733.9h3v3.2h-3zM960.7 757.5h3v3.2h-3zM960.7 781.2h3v3.2h-3zM960.7 804.8h3v3.2h-3zM960.7 828.4h3v3.2h-3zM984.3 1.7h3v3.2h-3zM984.3 25.3h3v3.2h-3zM984.3 48.9h3v3.2h-3zM984.3 72.6h3v3.2h-3zM984.3 96.2h3v3.2h-3zM984.3 119.8h3v3.2h-3zM984.3 143.4h3v3.2h-3zM984.3 167.0h3v3.2h-3zM984.3 190.7h3v3.2h-3zM984.3 214.3h3v3.2h-3zM984.3 237.9h3v3.2h-3zM984.3 261.5h3v3.2h-3zM984.3 285.1h3v3.2h-3zM984.3 308.8h3v3.2h-3zM984.3 332.4h3v3.2h-3zM984.3 356.0h3v3.2h-3zM984.3 379.6h3v3.2h-3zM984.3 403.2h3v3.2h-3zM984.3 426.9h3v3.2h-3zM984.3 450.5h3v3.2h-3zM984.3 474.1h3v3.2h-3zM984.3 497.7h3v3.2h-3zM984.3 521.3h3v3.2h-3zM984.3 545.0h3v3.2h-3zM984.3 568.6h3v3.2h-3zM984.3 592.2h3v3.2h-3zM984.3 615.8h3v3.2h-3zM984.3 639.4h3v3.2h-3zM984.3 663.1h3v3.2h-3zM984.3 686.7h3v3.2h-3zM984.3 710.3h3v3.2h-3zM984.3 733.9h3v3.2h-3zM984.3 757.5h3v3.2h-3zM984.3 781.2h3v3.2h-3zM984.3 804.8h3v3.2h-3zM984.3 828.4h3v3.2h-3z"/>
<rect x="75" y="73" width="289" height="333" rx="8" fill="#000" opacity="0.5" filter="url(#blur)"/>
<rect x="77" y="74" width="285" height="329" rx="6.5" fill="#000" opacity="0.3"/>
<rect x="78" y="75" width="283" height="327" rx="5.5" fill="#303030"/>
<path d="M78 99 V80.5 A5.5 5.5 0 0 1 83.5 75 H355.5 A5.5 5.5 0 0 1 361 80.5 V99 Z" fill="#79441d"/>
<rect x="78" y="98.5" width="283" height="1.2" fill="#000" opacity="0.35"/>
<path d="M91.25 84.40 L95.90 89.20 L100.55 84.40" fill="none" stroke="#e6e6e6" stroke-width="1.3" stroke-linecap="round" stroke-linejoin="round"/>
<text x="107.90" y="91.20" text-anchor="start" fill="#e6e6e6" font-size="14" textLength="152.90" lengthAdjust="spacingAndGlyphs">UIX0116_Diffuse.win.dds</text>
<text x="348.50" y="121.00" text-anchor="end" fill="#e6e6e6" font-size="14" textLength="31.70" lengthAdjust="spacingAndGlyphs">Color</text>
<circle cx="361.00" cy="116.50" r="5.5" fill="#c7c729" stroke="#111" stroke-width="1.0"/>
<text x="348.50" y="146.80" text-anchor="end" fill="#e6e6e6" font-size="14" textLength="34.80" lengthAdjust="spacingAndGlyphs">Alpha</text>
<circle cx="361.00" cy="142.30" r="5.5" fill="#a1a1a1" stroke="#111" stroke-width="1.0"/>
<rect x="90" y="166.5" width="258" height="22.80" rx="4" fill="#282828" stroke="#3d3d3d" stroke-width="1"/>
<rect x="126.5" y="167.0" width="127.3" height="21.80" fill="#1d1d1d"/>
<path d="M254.2 166.5 H344 A4 4 0 0 1 348 170.5 V185.30 A4 4 0 0 1 344 189.30 H254.2 Z" fill="#545454"/>
<rect x="277.0" y="166.5" width="1" height="22.80" fill="#3d3d3d"/>
<rect x="300.9" y="166.5" width="1" height="22.80" fill="#3d3d3d"/>
<rect x="325.0" y="166.5" width="1" height="22.80" fill="#3d3d3d"/>
<rect x="126" y="166.5" width="1" height="22.80" fill="#3a3a3a"/>
<rect x="95.6" y="170.35" width="15.8" height="15.05" fill="none" stroke="#e6e6e6" stroke-width="1.2"/>
<path d="M100.56 176.9 L94.8 186.1 L106.0 186.1 Z" fill="#e6e6e6" stroke="#282828" stroke-width="1.6" paint-order="stroke"/>
<circle cx="106.1" cy="174.9" r="2" fill="#e6e6e6"/>
<path d="M115.20 177.20 L119.00 180.80 L122.80 177.20" fill="none" stroke="#e6e6e6" stroke-width="1.3" stroke-linecap="round" stroke-linejoin="round"/>
<text x="134.80" y="182.10" text-anchor="start" fill="#e6e6e6" font-size="14" textLength="114.20" lengthAdjust="spacingAndGlyphs">UIX0116_Diffuse....</text>
<path d="M265.50 170.60 L272.30 172.50 V179.00 C272.30 182.00 269.00 183.30 265.50 185.30 C262.00 183.30 258.70 182.00 258.70 179.00 V172.50 Z" fill="none" stroke="#a6a6a6" stroke-width="1.2" stroke-linejoin="round"/>
<path d="M284.80 173.60 H281.70 V185.10 H293.40 V183.00" fill="none" stroke="#d4d4d4" stroke-width="1.4"/>
<path d="M293.80 170.40 H286.60 V181.00 H297.30 V175.80" fill="none" stroke="#dedede" stroke-width="1.4"/>
<path d="M293.60 169.70 L298.00 173.70 H293.60 Z" fill="#e2e2e2"/>
<path d="M305 171.00 H310.8 V172.80 H322 V175.60 H305 Z" fill="#e6e6e6"/>
<rect x="305" y="177.10" width="17" height="8.8" fill="#e6e6e6"/>
<path d="M332.3 172.9 L341.7 182.9 M341.7 172.9 L332.3 182.9" stroke="#e6e6e6" stroke-width="1.2"/>
<rect x="90.00" y="197.00" width="258.50" height="21.50" rx="4" fill="#282828" stroke="#3d3d3d" stroke-width="1"/>
<text x="97.70" y="211.95" text-anchor="start" fill="#e6e6e6" font-size="14" textLength="38.80" lengthAdjust="spacingAndGlyphs">Linear</text>
<path d="M338.65 206.40 L341.80 210.40 L344.95 206.40" fill="none" stroke="#e6e6e6" stroke-width="1.35" stroke-linecap="round" stroke-linejoin="round"/>
<rect x="90.00" y="226.35" width="258.50" height="21.50" rx="4" fill="#282828" stroke="#3d3d3d" stroke-width="1"/>
<text x="97.70" y="241.30" text-anchor="start" fill="#e6e6e6" font-size="14" textLength="23.00" lengthAdjust="spacingAndGlyphs">Flat</text>
<path d="M338.65 235.75 L341.80 239.75 L344.95 235.75" fill="none" stroke="#e6e6e6" stroke-width="1.35" stroke-linecap="round" stroke-linejoin="round"/>
<rect x="90.00" y="255.70" width="258.50" height="21.50" rx="4" fill="#282828" stroke="#3d3d3d" stroke-width="1"/>
<text x="97.70" y="270.65" text-anchor="start" fill="#e6e6e6" font-size="14" textLength="45.80" lengthAdjust="spacingAndGlyphs">Repeat</text>
<path d="M338.65 265.10 L341.80 269.10 L344.95 265.10" fill="none" stroke="#e6e6e6" stroke-width="1.35" stroke-linecap="round" stroke-linejoin="round"/>
<rect x="90.00" y="285.05" width="258.50" height="21.50" rx="4" fill="#282828" stroke="#3d3d3d" stroke-width="1"/>
<text x="97.70" y="300.00" text-anchor="start" fill="#e6e6e6" font-size="14" textLength="80.50" lengthAdjust="spacingAndGlyphs">Single Image</text>
<path d="M338.65 294.45 L341.80 298.45 L344.95 294.45" fill="none" stroke="#e6e6e6" stroke-width="1.35" stroke-linecap="round" stroke-linejoin="round"/>
<text x="89.80" y="329.85" text-anchor="start" fill="#e6e6e6" font-size="14" textLength="73.00" lengthAdjust="spacingAndGlyphs">Color Space</text>
<rect x="181.00" y="314.40" width="167.50" height="21.50" rx="4" fill="#282828" stroke="#3d3d3d" stroke-width="1"/>
<text x="188.70" y="329.35" text-anchor="start" fill="#e6e6e6" font-size="14" textLength="34.00" lengthAdjust="spacingAndGlyphs">sRGB</text>
<path d="M338.65 323.80 L341.80 327.80 L344.95 323.80" fill="none" stroke="#e6e6e6" stroke-width="1.35" stroke-linecap="round" stroke-linejoin="round"/>
<text x="89.80" y="359.20" text-anchor="start" fill="#e6e6e6" font-size="14" textLength="34.70" lengthAdjust="spacingAndGlyphs">Alpha</text>
<rect x="181.00" y="343.75" width="167.50" height="21.50" rx="4" fill="#282828" stroke="#3d3d3d" stroke-width="1"/>
<text x="188.70" y="358.70" text-anchor="start" fill="#e6e6e6" font-size="14" textLength="49.60" lengthAdjust="spacingAndGlyphs">Straight</text>
<path d="M338.65 353.15 L341.80 357.15 L344.95 353.15" fill="none" stroke="#e6e6e6" stroke-width="1.35" stroke-linecap="round" stroke-linejoin="round"/>
<text x="89.80" y="389.00" text-anchor="start" fill="#e6e6e6" font-size="14" textLength="40.70" lengthAdjust="spacingAndGlyphs">Vector</text>
<circle cx="77.70" cy="384.50" r="5.5" fill="#6363c7" stroke="#111" stroke-width="1.0"/>
<rect x="71" y="455.8" width="289" height="332.6" rx="8" fill="#000" opacity="0.5" filter="url(#blur)"/>
<rect x="73" y="456.8" width="285" height="328.6" rx="6.5" fill="#000" opacity="0.3"/>
<rect x="74" y="457.8" width="283" height="326.6" rx="5.5" fill="#303030"/>
<path d="M74 481.8 V463.3 A5.5 5.5 0 0 1 79.5 457.8 H351.5 A5.5 5.5 0 0 1 357 463.3 V481.8 Z" fill="#79441d"/>
<rect x="74" y="481.3" width="283" height="1.2" fill="#000" opacity="0.35"/>
<path d="M87.30 466.45 L91.95 471.25 L96.60 466.45" fill="none" stroke="#e6e6e6" stroke-width="1.3" stroke-linecap="round" stroke-linejoin="round"/>
<text x="104.70" y="473.50" text-anchor="start" fill="#e6e6e6" font-size="14" textLength="152.90" lengthAdjust="spacingAndGlyphs">UIX0116_Normal.win.dds</text>
<text x="345.30" y="503.30" text-anchor="end" fill="#e6e6e6" font-size="14" textLength="31.70" lengthAdjust="spacingAndGlyphs">Color</text>
<circle cx="357.00" cy="498.80" r="5.5" fill="#c7c729" stroke="#111" stroke-width="1.0"/>
<text x="345.30" y="529.10" text-anchor="end" fill="#e6e6e6" font-size="14" textLength="34.80" lengthAdjust="spacingAndGlyphs">Alpha</text>
<circle cx="357.00" cy="524.60" r="5.5" fill="#a1a1a1" stroke="#111" stroke-width="1.0"/>
<rect x="86.8" y="548.8" width="258" height="22.80" rx="4" fill="#282828" stroke="#3d3d3d" stroke-width="1"/>
<rect x="123.3" y="549.3" width="127.3" height="21.80" fill="#1d1d1d"/>
<path d="M251.0 548.8 H340.8 A4 4 0 0 1 344.8 552.8 V567.60 A4 4 0 0 1 340.8 571.60 H251.0 Z" fill="#545454"/>
<rect x="273.8" y="548.8" width="1" height="22.80" fill="#3d3d3d"/>
<rect x="297.7" y="548.8" width="1" height="22.80" fill="#3d3d3d"/>
<rect x="321.8" y="548.8" width="1" height="22.80" fill="#3d3d3d"/>
<rect x="122.8" y="548.8" width="1" height="22.80" fill="#3a3a3a"/>
<rect x="92.4" y="552.65" width="15.8" height="15.05" fill="none" stroke="#e6e6e6" stroke-width="1.2"/>
<path d="M97.36 559.2 L91.6 568.4 L102.8 568.4 Z" fill="#e6e6e6" stroke="#282828" stroke-width="1.6" paint-order="stroke"/>
<circle cx="102.9" cy="557.2" r="2" fill="#e6e6e6"/>
<path d="M112.00 559.50 L115.80 563.10 L119.60 559.50" fill="none" stroke="#e6e6e6" stroke-width="1.3" stroke-linecap="round" stroke-linejoin="round"/>
<text x="131.60" y="564.40" text-anchor="start" fill="#e6e6e6" font-size="14" textLength="113.60" lengthAdjust="spacingAndGlyphs">UIX0116_Normal....</text>
<path d="M262.30 552.90 L269.10 554.80 V561.30 C269.10 564.30 265.80 565.60 262.30 567.60 C258.80 565.60 255.50 564.30 255.50 561.30 V554.80 Z" fill="none" stroke="#a6a6a6" stroke-width="1.2" stroke-linejoin="round"/>
<path d="M281.60 555.90 H278.50 V567.40 H290.20 V565.30" fill="none" stroke="#d4d4d4" stroke-width="1.4"/>
<path d="M290.60 552.70 H283.40 V563.30 H294.10 V558.10" fill="none" stroke="#dedede" stroke-width="1.4"/>
<path d="M290.40 552.00 L294.80 556.00 H290.40 Z" fill="#e2e2e2"/>
<path d="M301.8 553.30 H307.6 V555.10 H318.8 V557.90 H301.8 Z" fill="#e6e6e6"/>
<rect x="301.8" y="559.40" width="17" height="8.8" fill="#e6e6e6"/>
<path d="M329.1 555.2 L338.5 565.2 M338.5 555.2 L329.1 565.2" stroke="#e6e6e6" stroke-width="1.2"/>
<rect x="86.80" y="579.30" width="258.50" height="21.50" rx="4" fill="#282828" stroke="#3d3d3d" stroke-width="1"/>
<text x="94.50" y="594.25" text-anchor="start" fill="#e6e6e6" font-size="14" textLength="38.80" lengthAdjust="spacingAndGlyphs">Linear</text>
<path d="M335.45 588.70 L338.60 592.70 L341.75 588.70" fill="none" stroke="#e6e6e6" stroke-width="1.35" stroke-linecap="round" stroke-linejoin="round"/>
<rect x="86.80" y="608.65" width="258.50" height="21.50" rx="4" fill="#282828" stroke="#3d3d3d" stroke-width="1"/>
<text x="94.50" y="623.60" text-anchor="start" fill="#e6e6e6" font-size="14" textLength="23.00" lengthAdjust="spacingAndGlyphs">Flat</text>
<path d="M335.45 618.05 L338.60 622.05 L341.75 618.05" fill="none" stroke="#e6e6e6" stroke-width="1.35" stroke-linecap="round" stroke-linejoin="round"/>
<rect x="86.80" y="638.00" width="258.50" height="21.50" rx="4" fill="#282828" stroke="#3d3d3d" stroke-width="1"/>
<text x="94.50" y="652.95" text-anchor="start" fill="#e6e6e6" font-size="14" textLength="45.80" lengthAdjust="spacingAndGlyphs">Repeat</text>
<path d="M335.45 647.40 L338.60 651.40 L341.75 647.40" fill="none" stroke="#e6e6e6" stroke-width="1.35" stroke-linecap="round" stroke-linejoin="round"/>
<rect x="86.80" y="667.35" width="258.50" height="21.50" rx="4" fill="#282828" stroke="#3d3d3d" stroke-width="1"/>
<text x="94.50" y="682.30" text-anchor="start" fill="#e6e6e6" font-size="14" textLength="80.50" lengthAdjust="spacingAndGlyphs">Single Image</text>
<path d="M335.45 676.75 L338.60 680.75 L341.75 676.75" fill="none" stroke="#e6e6e6" stroke-width="1.35" stroke-linecap="round" stroke-linejoin="round"/>
<text x="86.60" y="712.15" text-anchor="start" fill="#e6e6e6" font-size="14" textLength="73.00" lengthAdjust="spacingAndGlyphs">Color Space</text>
<rect x="177.80" y="696.70" width="167.50" height="21.50" rx="4" fill="#282828" stroke="#3d3d3d" stroke-width="1"/>
<text x="185.50" y="711.65" text-anchor="start" fill="#e6e6e6" font-size="14" textLength="34.00" lengthAdjust="spacingAndGlyphs">sRGB</text>
<path d="M335.45 706.10 L338.60 710.10 L341.75 706.10" fill="none" stroke="#e6e6e6" stroke-width="1.35" stroke-linecap="round" stroke-linejoin="round"/>
<text x="86.60" y="741.50" text-anchor="start" fill="#e6e6e6" font-size="14" textLength="34.70" lengthAdjust="spacingAndGlyphs">Alpha</text>
<rect x="177.80" y="726.05" width="167.50" height="21.50" rx="4" fill="#282828" stroke="#3d3d3d" stroke-width="1"/>
<text x="185.50" y="741.00" text-anchor="start" fill="#e6e6e6" font-size="14" textLength="49.60" lengthAdjust="spacingAndGlyphs">Straight</text>
<path d="M335.45 735.45 L338.60 739.45 L341.75 735.45" fill="none" stroke="#e6e6e6" stroke-width="1.35" stroke-linecap="round" stroke-linejoin="round"/>
<text x="86.60" y="771.30" text-anchor="start" fill="#e6e6e6" font-size="14" textLength="40.70" lengthAdjust="spacingAndGlyphs">Vector</text>
<circle cx="73.70" cy="766.80" r="5.5" fill="#6363c7" stroke="#111" stroke-width="1.0"/>
<rect x="475" y="48" width="289" height="786" rx="8" fill="#000" opacity="0.5" filter="url(#blur)"/>
<rect x="477" y="49" width="285" height="782" rx="6.5" fill="#000" opacity="0.3"/>
<rect x="478" y="50" width="283" height="780" rx="5.5" fill="#303030"/>
<path d="M478 74 V55.5 A5.5 5.5 0 0 1 483.5 50 H755.5 A5.5 5.5 0 0 1 761 55.5 V74 Z" fill="#2b652b"/>
<rect x="478" y="73.5" width="283" height="1.2" fill="#000" opacity="0.35"/>
<path d="M491.25 60.45 L495.90 65.25 L500.55 60.45" fill="none" stroke="#e6e6e6" stroke-width="1.3" stroke-linecap="round" stroke-linejoin="round"/>
<text x="507.20" y="66.20" text-anchor="start" fill="#e6e6e6" font-size="14" textLength="96.50" lengthAdjust="spacingAndGlyphs">Principled BSDF</text>
<text x="749.70" y="96.10" text-anchor="end" fill="#e6e6e6" font-size="14" textLength="33.60" lengthAdjust="spacingAndGlyphs">BSDF</text>
<rect x="491.00" y="115.80" width="258.50" height="22.20" rx="4" fill="#282828" stroke="#3d3d3d" stroke-width="1"/>
<text x="498.60" y="131.10" text-anchor="start" fill="#e6e6e6" font-size="14" textLength="29.00" lengthAdjust="spacingAndGlyphs">GGX</text>
<path d="M739.65 125.55 L742.80 129.55 L745.95 125.55" fill="none" stroke="#e6e6e6" stroke-width="1.35" stroke-linecap="round" stroke-linejoin="round"/>
<rect x="491.00" y="145.80" width="258.50" height="22.00" rx="4" fill="#282828" stroke="#3d3d3d" stroke-width="1"/>
<text x="498.60" y="161.00" text-anchor="start" fill="#e6e6e6" font-size="14" textLength="84.70" lengthAdjust="spacingAndGlyphs">Random Walk</text>
<path d="M739.65 155.45 L742.80 159.45 L745.95 155.45" fill="none" stroke="#e6e6e6" stroke-width="1.35" stroke-linecap="round" stroke-linejoin="round"/>
<text x="491.30" y="190.20" text-anchor="start" fill="#e6e6e6" font-size="14" textLength="64.20" lengthAdjust="spacingAndGlyphs">Base Color</text>
<rect x="599.2" y="175.00" width="150.00" height="22" rx="4" fill="#e7e7e7"/>
<circle cx="478.00" cy="186.00" r="5.5" fill="#c7c729" stroke="#111" stroke-width="1.0"/>
<rect x="491" y="200.80" width="258" height="22.4" rx="4" fill="#545454"/>
<rect x="494" y="222.60" width="252" height="1" fill="#000" opacity="0.25"/>
<text x="508.80" y="216.20" text-anchor="start" fill="#e6e6e6" font-size="14" textLength="69.20" lengthAdjust="spacingAndGlyphs">Subsurface</text>
<text x="733.00" y="216.20" text-anchor="end" fill="#e6e6e6" font-size="14" textLength="35.70" lengthAdjust="spacingAndGlyphs">0.000</text>
<circle cx="478.00" cy="212.00" r="5.5" fill="#a1a1a1" stroke="#111" stroke-width="1.0"/>
<rect x="491.00" y="227.00" width="258.50" height="22.00" rx="4" fill="#282828" stroke="#3d3d3d" stroke-width="1"/>
<text x="499.10" y="242.20" text-anchor="start" fill="#e6e6e6" font-size="14" textLength="114.70" lengthAdjust="spacingAndGlyphs">Subsurface Radius</text>
<path d="M739.65 236.65 L742.80 240.65 L745.95 236.65" fill="none" stroke="#e6e6e6" stroke-width="1.35" stroke-linecap="round" stroke-linejoin="round"/>
<circle cx="478.00" cy="238.00" r="5.5" fill="#6363c7" stroke="#111" stroke-width="1.0"/>
<text x="491.30" y="268.20" text-anchor="start" fill="#e6e6e6" font-size="14" textLength="97.80" lengthAdjust="spacingAndGlyphs">Subsurface Co...</text>
<rect x="599.2" y="253.00" width="150.00" height="22" rx="4" fill="#e7e7e7"/>
<circle cx="478.00" cy="264.00" r="5.5" fill="#c7c729" stroke="#111" stroke-width="1.0"/>
<rect x="491" y="278.80" width="258" height="22.4" rx="4" fill="#545454"/>
<clipPath id="c139"><rect x="491" y="278.80" width="34.00" height="22.4"/></clipPath>
<rect x="491" y="278.80" width="258" height="22.4" rx="4" fill="#4772b3" clip-path="url(#c139)"/>
<rect x="494" y="300.60" width="252" height="1" fill="#000" opacity="0.25"/>
<text x="508.80" y="294.20" text-anchor="start" fill="#e6e6e6" font-size="14" textLength="95.40" lengthAdjust="spacingAndGlyphs">Subsurface IOR</text>
<text x="733.00" y="294.20" text-anchor="end" fill="#e6e6e6" font-size="14" textLength="35.70" lengthAdjust="spacingAndGlyphs">1.400</text>
<circle cx="478.00" cy="290.00" r="5.5" fill="#a1a1a1" stroke="#111" stroke-width="1.0"/>
<rect x="491" y="304.80" width="258" height="22.4" rx="4" fill="#545454"/>
<rect x="494" y="326.60" width="252" height="1" fill="#000" opacity="0.25"/>
<text x="508.80" y="320.20" text-anchor="start" fill="#e6e6e6" font-size="14" textLength="138.10" lengthAdjust="spacingAndGlyphs">Subsurface Anisotropy</text>
<text x="733.00" y="320.20" text-anchor="end" fill="#e6e6e6" font-size="14" textLength="35.70" lengthAdjust="spacingAndGlyphs">0.000</text>
<circle cx="478.00" cy="316.00" r="5.5" fill="#a1a1a1" stroke="#111" stroke-width="1.0"/>
<rect x="491" y="330.80" width="258" height="22.4" rx="4" fill="#545454"/>
<rect x="494" y="352.60" width="252" height="1" fill="#000" opacity="0.25"/>
<text x="508.80" y="346.20" text-anchor="start" fill="#e6e6e6" font-size="14" textLength="47.70" lengthAdjust="spacingAndGlyphs">Metallic</text>
<text x="733.00" y="346.20" text-anchor="end" fill="#e6e6e6" font-size="14" textLength="35.70" lengthAdjust="spacingAndGlyphs">0.000</text>
<circle cx="478.00" cy="342.00" r="5.5" fill="#a1a1a1" stroke="#111" stroke-width="1.0"/>
<rect x="491" y="356.80" width="258" height="22.4" rx="4" fill="#545454"/>
<clipPath id="c156"><rect x="491" y="356.80" width="129.00" height="22.4"/></clipPath>
<rect x="491" y="356.80" width="258" height="22.4" rx="4" fill="#4772b3" clip-path="url(#c156)"/>
<rect x="494" y="378.60" width="252" height="1" fill="#000" opacity="0.25"/>
<text x="508.80" y="372.20" text-anchor="start" fill="#e6e6e6" font-size="14" textLength="54.60" lengthAdjust="spacingAndGlyphs">Specular</text>
<text x="733.00" y="372.20" text-anchor="end" fill="#e6e6e6" font-size="14" textLength="35.70" lengthAdjust="spacingAndGlyphs">0.500</text>
<circle cx="478.00" cy="368.00" r="5.5" fill="#a1a1a1" stroke="#111" stroke-width="1.0"/>
<rect x="491" y="382.80" width="258" height="22.4" rx="4" fill="#545454"/>
<rect x="494" y="404.60" width="252" height="1" fill="#000" opacity="0.25"/>
<text x="508.80" y="398.20" text-anchor="start" fill="#e6e6e6" font-size="14" textLength="81.70" lengthAdjust="spacingAndGlyphs">Specular Tint</text>
<text x="733.00" y="398.20" text-anchor="end" fill="#e6e6e6" font-size="14" textLength="35.70" lengthAdjust="spacingAndGlyphs">0.000</text>
<circle cx="478.00" cy="394.00" r="5.5" fill="#a1a1a1" stroke="#111" stroke-width="1.0"/>
<rect x="491" y="408.80" width="258" height="22.4" rx="4" fill="#545454"/>
<clipPath id="c168"><rect x="491" y="408.80" width="129.00" height="22.4"/></clipPath>
<rect x="491" y="408.80" width="258" height="22.4" rx="4" fill="#4772b3" clip-path="url(#c168)"/>
<rect x="494" y="430.60" width="252" height="1" fill="#000" opacity="0.25"/>
<text x="508.80" y="424.20" text-anchor="start" fill="#e6e6e6" font-size="14" textLength="69.20" lengthAdjust="spacingAndGlyphs">Roughness</text>
<text x="733.00" y="424.20" text-anchor="end" fill="#e6e6e6" font-size="14" textLength="35.70" lengthAdjust="spacingAndGlyphs">0.500</text>
<circle cx="478.00" cy="420.00" r="5.5" fill="#a1a1a1" stroke="#111" stroke-width="1.0"/>
<rect x="491" y="434.80" width="258" height="22.4" rx="4" fill="#545454"/>
<rect x="494" y="456.60" width="252" height="1" fill="#000" opacity="0.25"/>
<text x="508.80" y="450.20" text-anchor="start" fill="#e6e6e6" font-size="14" textLength="67.50" lengthAdjust="spacingAndGlyphs">Anisotropic</text>
<text x="733.00" y="450.20" text-anchor="end" fill="#e6e6e6" font-size="14" textLength="35.70" lengthAdjust="spacingAndGlyphs">0.000</text>
<circle cx="478.00" cy="446.00" r="5.5" fill="#a1a1a1" stroke="#111" stroke-width="1.0"/>
<rect x="491" y="460.80" width="258" height="22.4" rx="4" fill="#545454"/>
<rect x="494" y="482.60" width="252" height="1" fill="#000" opacity="0.25"/>
<text x="508.80" y="476.20" text-anchor="start" fill="#e6e6e6" font-size="14" textLength="122.30" lengthAdjust="spacingAndGlyphs">Anisotropic Rotation</text>
<text x="733.00" y="476.20" text-anchor="end" fill="#e6e6e6" font-size="14" textLength="35.70" lengthAdjust="spacingAndGlyphs">0.000</text>
<circle cx="478.00" cy="472.00" r="5.5" fill="#a1a1a1" stroke="#111" stroke-width="1.0"/>
<rect x="491" y="486.80" width="258" height="22.4" rx="4" fill="#545454"/>
<rect x="494" y="508.60" width="252" height="1" fill="#000" opacity="0.25"/>
<text x="508.80" y="502.20" text-anchor="start" fill="#e6e6e6" font-size="14" textLength="40.30" lengthAdjust="spacingAndGlyphs">Sheen</text>
<text x="733.00" y="502.20" text-anchor="end" fill="#e6e6e6" font-size="14" textLength="35.70" lengthAdjust="spacingAndGlyphs">0.000</text>
<circle cx="478.00" cy="498.00" r="5.5" fill="#a1a1a1" stroke="#111" stroke-width="1.0"/>
<rect x="491" y="512.80" width="258" height="22.4" rx="4" fill="#545454"/>
<clipPath id="c190"><rect x="491" y="512.80" width="129.00" height="22.4"/></clipPath>
<rect x="491" y="512.80" width="258" height="22.4" rx="4" fill="#4772b3" clip-path="url(#c190)"/>
<rect x="494" y="534.60" width="252" height="1" fill="#000" opacity="0.25"/>
<text x="508.80" y="528.20" text-anchor="start" fill="#e6e6e6" font-size="14" textLength="67.90" lengthAdjust="spacingAndGlyphs">Sheen Tint</text>
<text x="733.00" y="528.20" text-anchor="end" fill="#e6e6e6" font-size="14" textLength="35.70" lengthAdjust="spacingAndGlyphs">0.500</text>
<circle cx="478.00" cy="524.00" r="5.5" fill="#a1a1a1" stroke="#111" stroke-width="1.0"/>
<rect x="491" y="538.80" width="258" height="22.4" rx="4" fill="#545454"/>
<rect x="494" y="560.60" width="252" height="1" fill="#000" opacity="0.25"/>
<text x="508.80" y="554.20" text-anchor="start" fill="#e6e6e6" font-size="14" textLength="58.70" lengthAdjust="spacingAndGlyphs">Clearcoat</text>
<text x="733.00" y="554.20" text-anchor="end" fill="#e6e6e6" font-size="14" textLength="35.70" lengthAdjust="spacingAndGlyphs">0.000</text>
<circle cx="478.00" cy="550.00" r="5.5" fill="#a1a1a1" stroke="#111" stroke-width="1.0"/>
<rect x="491" y="564.80" width="258" height="22.4" rx="4" fill="#545454"/>
<clipPath id="c202"><rect x="491" y="564.80" width="6.00" height="22.4"/></clipPath>
<rect x="491" y="564.80" width="258" height="22.4" rx="4" fill="#4772b3" clip-path="url(#c202)"/>
<rect x="494" y="586.60" width="252" height="1" fill="#000" opacity="0.25"/>
<text x="508.80" y="580.20" text-anchor="start" fill="#e6e6e6" font-size="14" textLength="131.10" lengthAdjust="spacingAndGlyphs">Clearcoat Roughness</text>
<text x="733.00" y="580.20" text-anchor="end" fill="#e6e6e6" font-size="14" textLength="35.70" lengthAdjust="spacingAndGlyphs">0.030</text>
<circle cx="478.00" cy="576.00" r="5.5" fill="#a1a1a1" stroke="#111" stroke-width="1.0"/>
<rect x="491" y="590.80" width="258" height="22.4" rx="4" fill="#545454"/>
<rect x="494" y="612.60" width="252" height="1" fill="#000" opacity="0.25"/>
<text x="508.80" y="606.20" text-anchor="start" fill="#e6e6e6" font-size="14" textLength="22.30" lengthAdjust="spacingAndGlyphs">IOR</text>
<text x="733.00" y="606.20" text-anchor="end" fill="#e6e6e6" font-size="14" textLength="35.70" lengthAdjust="spacingAndGlyphs">1.450</text>
<circle cx="478.00" cy="602.00" r="5.5" fill="#a1a1a1" stroke="#111" stroke-width="1.0"/>
<rect x="491" y="616.80" width="258" height="22.4" rx="4" fill="#545454"/>
<rect x="494" y="638.60" width="252" height="1" fill="#000" opacity="0.25"/>
<text x="508.80" y="632.20" text-anchor="start" fill="#e6e6e6" font-size="14" textLength="78.50" lengthAdjust="spacingAndGlyphs">Transmission</text>
<text x="733.00" y="632.20" text-anchor="end" fill="#e6e6e6" font-size="14" textLength="35.70" lengthAdjust="spacingAndGlyphs">0.000</text>
<circle cx="478.00" cy="628.00" r="5.5" fill="#a1a1a1" stroke="#111" stroke-width="1.0"/>
<rect x="491" y="642.80" width="258" height="22.4" rx="4" fill="#545454"/>
<rect x="494" y="664.60" width="252" height="1" fill="#000" opacity="0.25"/>
<text x="508.80" y="658.20" text-anchor="start" fill="#e6e6e6" font-size="14" textLength="150.90" lengthAdjust="spacingAndGlyphs">Transmission Roughness</text>
<text x="733.00" y="658.20" text-anchor="end" fill="#e6e6e6" font-size="14" textLength="35.70" lengthAdjust="spacingAndGlyphs">0.000</text>
<circle cx="478.00" cy="654.00" r="5.5" fill="#a1a1a1" stroke="#111" stroke-width="1.0"/>
<text x="491.30" y="684.20" text-anchor="start" fill="#e6e6e6" font-size="14" textLength="53.00" lengthAdjust="spacingAndGlyphs">Emission</text>
<rect x="599.2" y="669.00" width="150.00" height="22" rx="4" fill="#000000"/>
<circle cx="478.00" cy="680.00" r="5.5" fill="#c7c729" stroke="#111" stroke-width="1.0"/>
<rect x="491" y="694.80" width="258" height="22.4" rx="4" fill="#545454"/>
<rect x="494" y="716.60" width="252" height="1" fill="#000" opacity="0.25"/>
<text x="508.80" y="710.20" text-anchor="start" fill="#e6e6e6" font-size="14" textLength="112.60" lengthAdjust="spacingAndGlyphs">Emission Strength</text>
<text x="733.00" y="710.20" text-anchor="end" fill="#e6e6e6" font-size="14" textLength="35.70" lengthAdjust="spacingAndGlyphs">1.000</text>
<circle cx="478.00" cy="706.00" r="5.5" fill="#a1a1a1" stroke="#111" stroke-width="1.0"/>
<rect x="491" y="720.80" width="258" height="22.4" rx="4" fill="#545454"/>
<clipPath id="c232"><rect x="491" y="720.80" width="258.00" height="22.4"/></clipPath>
<rect x="491" y="720.80" width="258" height="22.4" rx="4" fill="#4772b3" clip-path="url(#c232)"/>
<rect x="494" y="742.60" width="252" height="1" fill="#000" opacity="0.25"/>
<text x="508.80" y="736.20" text-anchor="start" fill="#e6e6e6" font-size="14" textLength="35.20" lengthAdjust="spacingAndGlyphs">Alpha</text>
<text x="733.00" y="736.20" text-anchor="end" fill="#e6e6e6" font-size="14" textLength="35.70" lengthAdjust="spacingAndGlyphs">1.000</text>
<circle cx="478.00" cy="732.00" r="5.5" fill="#a1a1a1" stroke="#111" stroke-width="1.0"/>
<text x="491.30" y="762.20" text-anchor="start" fill="#e6e6e6" font-size="14" textLength="43.80" lengthAdjust="spacingAndGlyphs">Normal</text>
<circle cx="478.00" cy="758.00" r="5.5" fill="#6363c7" stroke="#111" stroke-width="1.0"/>
<text x="491.30" y="788.20" text-anchor="start" fill="#e6e6e6" font-size="14" textLength="105.50" lengthAdjust="spacingAndGlyphs">Clearcoat Normal</text>
<circle cx="478.00" cy="784.00" r="5.5" fill="#6363c7" stroke="#111" stroke-width="1.0"/>
<text x="491.30" y="814.20" text-anchor="start" fill="#e6e6e6" font-size="14" textLength="51.20" lengthAdjust="spacingAndGlyphs">Tangent</text>
<circle cx="478.00" cy="810.00" r="5.5" fill="#6363c7" stroke="#111" stroke-width="1.0"/>
<rect x="818" y="48" width="171" height="149" rx="8" fill="#000" opacity="0.5" filter="url(#blur)"/>
<rect x="820" y="49" width="167" height="145" rx="6.5" fill="#000" opacity="0.3"/>
<rect x="821" y="50" width="165" height="143" rx="5.5" fill="#303030"/>
<path d="M821 74 V55.5 A5.5 5.5 0 0 1 826.5 50 H980.5 A5.5 5.5 0 0 1 986 55.5 V74 Z" fill="#3c1d26"/>
<rect x="821" y="73.5" width="165" height="1.2" fill="#000" opacity="0.35"/>
<path d="M834.25 60.50 L838.90 65.30 L843.55 60.50" fill="none" stroke="#e6e6e6" stroke-width="1.3" stroke-linecap="round" stroke-linejoin="round"/>
<text x="850.00" y="66.20" text-anchor="start" fill="#e6e6e6" font-size="14" textLength="97.20" lengthAdjust="spacingAndGlyphs">Material Output</text>
<rect x="833.20" y="80.10" width="140.60" height="22.60" rx="4" fill="#282828" stroke="#3d3d3d" stroke-width="1"/>
<text x="840.80" y="95.60" text-anchor="start" fill="#e6e6e6" font-size="14" textLength="14.70" lengthAdjust="spacingAndGlyphs">All</text>
<path d="M963.95 90.05 L967.10 94.05 L970.25 90.05" fill="none" stroke="#e6e6e6" stroke-width="1.35" stroke-linecap="round" stroke-linejoin="round"/>
<text x="833.10" y="125.20" text-anchor="start" fill="#e6e6e6" font-size="14" textLength="46.70" lengthAdjust="spacingAndGlyphs">Surface</text>
<circle cx="821.00" cy="121.00" r="5.5" fill="#63c763" stroke="#111" stroke-width="1.0"/>
<text x="833.10" y="151.20" text-anchor="start" fill="#e6e6e6" font-size="14" textLength="45.60" lengthAdjust="spacingAndGlyphs">Volume</text>
<circle cx="821.00" cy="147.00" r="5.5" fill="#63c763" stroke="#111" stroke-width="1.0"/>
<text x="833.10" y="177.20" text-anchor="start" fill="#e6e6e6" font-size="14" textLength="85.40" lengthAdjust="spacingAndGlyphs">Displacement</text>
<circle cx="821.00" cy="173.00" r="5.5" fill="#6363c7" stroke="#111" stroke-width="1.0"/>
<path d="M761.5 91.5 C782.5 91.5 799.5 121 820.5 121" fill="none" stroke="#63c763" stroke-width="2.6"/>
<circle cx="761.50" cy="91.50" r="5.5" fill="#63c763" stroke="#111" stroke-width="1.0"/>
<circle cx="821.00" cy="121.00" r="5.5" fill="#63c763" stroke="#111" stroke-width="1.0"/>
<rect x="0" y="816" width="993" height="3" fill="#ffffff" opacity="0.08"/>
<rect x="0" y="819" width="993" height="3.5" fill="#000" opacity="0.25"/>
<rect x="0" y="822.5" width="993" height="13" fill="#1f1f1f"/>
<text x="14.30" y="836.20" text-anchor="start" fill="#8a8a8a" font-size="11.2" textLength="96.20" lengthAdjust="spacingAndGlyphs">Backimage Sample</text>
<rect x="-3" y="824.8" width="6" height="14" rx="2.5" fill="#8a8a8a"/>
</svg></body></html>
